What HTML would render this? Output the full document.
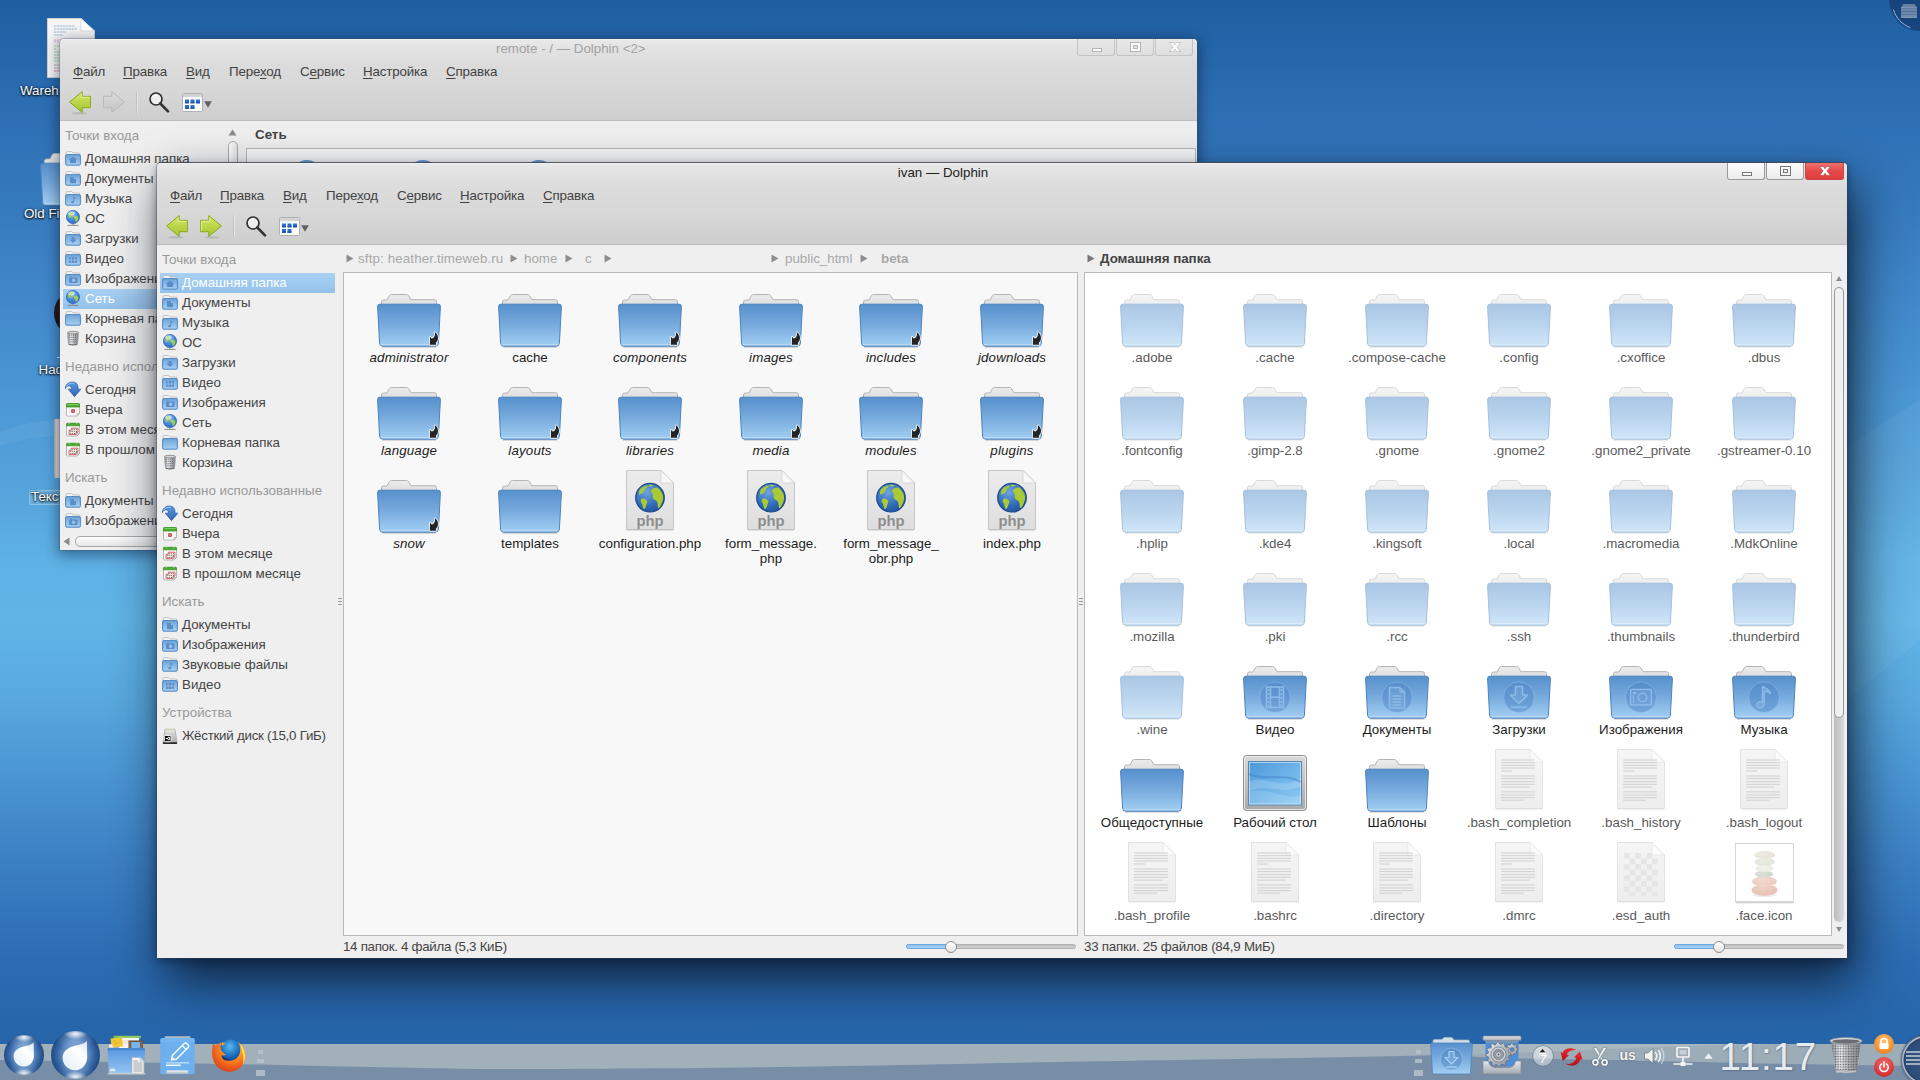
<!DOCTYPE html>
<html lang="ru"><head><meta charset="utf-8"><title>ivan — Dolphin</title>
<style>
*{box-sizing:border-box;margin:0;padding:0}
html,body{width:1920px;height:1080px;overflow:hidden}
body{position:relative;font-family:"Liberation Sans",sans-serif;font-size:13.33px;color:#444;
background:linear-gradient(180deg,#1f5fa0 0px,#2364a8 40px,#2c6db2 100px,#3579bd 200px,#4188ca 300px,#4c97d4 400px,#56a5dd 500px,#5db1e5 560px,#60b5e7 620px,#58a8de 700px,#4a94d2 780px,#3a7ec2 870px,#2c6cb2 960px,#2766ab 1020px,#2564a8 1080px);}
.abs{position:absolute}
.t{position:absolute;white-space:nowrap;line-height:16px;height:16px;margin-top:1px}
.win{position:absolute;background:#efefef;border-radius:4px 4px 0 0;}
.hdr{position:absolute;left:0;top:0;right:0;height:82px;border-radius:4px 4px 0 0;background:linear-gradient(180deg,#f5f5f5 0,#e9e9e9 1px,#e4e4e4 7px,#dcdcdc 24px,#d8d8d8 48px,#cecece 80.500px,#bcbcbc 81px,#bcbcbc 82px)}
.wb{position:absolute;top:0;width:38px;height:17px;border:1px solid #9a9a9a;border-top:none;border-radius:0 0 3px 3px;background:linear-gradient(#fdfdfd,#ececec)}
.wb.close{background:linear-gradient(#ee7272,#e64a4a 50%,#df3d3d);border-color:#c94444}
.menu span{position:absolute;top:1px;white-space:nowrap;line-height:16px;letter-spacing:-.15px}
.menu u{text-decoration:underline;text-underline-offset:1.5px;text-decoration-thickness:1px}
.sec{color:#999}
.view{position:absolute;border:1px solid #b9b9b9;background:#fff}
.lbl{position:absolute;text-align:center;white-space:nowrap;line-height:15px;transform:translateX(-50%);margin-top:1px}
.ic{position:absolute}
.dt{position:absolute;color:#fff;white-space:nowrap;line-height:16px;text-shadow:0 1px 2px #000,0 0 3px rgba(0,0,0,.8)}
</style></head>
<body>
<svg width="0" height="0" style="position:absolute"><defs>
<linearGradient id="gF" x1="0" y1="0" x2="0" y2="1"><stop offset="0" stop-color="#5690cc"/><stop offset=".5" stop-color="#78abde"/><stop offset="1" stop-color="#a2cff3"/></linearGradient>
<linearGradient id="gB" x1="0" y1="0" x2="0" y2="1"><stop offset="0" stop-color="#ececec"/><stop offset="1" stop-color="#dcdcdc"/></linearGradient>
<linearGradient id="gP" x1="0" y1="0" x2="0" y2="1"><stop offset="0" stop-color="#ececec"/><stop offset="1" stop-color="#dedede"/></linearGradient>
<radialGradient id="gGlobe" cx=".4" cy=".3" r=".8"><stop offset="0" stop-color="#6fa4e0"/><stop offset=".6" stop-color="#2f6bb8"/><stop offset="1" stop-color="#1f4f96"/></radialGradient>
<linearGradient id="gArrow" x1="0" y1="0" x2="0" y2="1"><stop offset="0" stop-color="#d6e86a"/><stop offset="1" stop-color="#a4c42e"/></linearGradient>
<linearGradient id="gArrowD" x1="0" y1="0" x2="0" y2="1"><stop offset="0" stop-color="#dcdcdc"/><stop offset="1" stop-color="#c4c4c4"/></linearGradient>
<linearGradient id="gMon" x1="0" y1="0" x2="0" y2="1"><stop offset="0" stop-color="#d9d9d9"/><stop offset="1" stop-color="#a8a8a8"/></linearGradient>
<linearGradient id="gScr" x1="0" y1="0" x2="1" y2="1"><stop offset="0" stop-color="#4d97d9"/><stop offset=".5" stop-color="#6db3e8"/><stop offset="1" stop-color="#8fcbf3"/></linearGradient>
<linearGradient id="gSF" x1="0" y1="0" x2="0" y2="1"><stop offset="0" stop-color="#6ea3d8"/><stop offset="1" stop-color="#a6d0f2"/></linearGradient>
<radialGradient id="gGlobeS" cx=".4" cy=".28" r=".85"><stop offset="0" stop-color="#a8d0f8"/><stop offset=".45" stop-color="#4a8ee0"/><stop offset="1" stop-color="#2a60b4"/></radialGradient>
<radialGradient id="gBall" cx=".5" cy=".5" r=".5"><stop offset="0" stop-color="#2a5a9a"/><stop offset=".55" stop-color="#1f4f90"/><stop offset=".8" stop-color="#3a6eae"/><stop offset="1" stop-color="#1a4482"/></radialGradient>
<linearGradient id="gTrash" x1="0" y1="0" x2="1" y2="0"><stop offset="0" stop-color="#8a8f94"/><stop offset=".3" stop-color="#e6e8ea"/><stop offset=".6" stop-color="#b0b4b8"/><stop offset="1" stop-color="#80858a"/></linearGradient>
<symbol id="folder" viewBox="0 0 64 64"><path d="M4.5 16V12Q4.5 10 6.5 10H10L12.4 5.6Q13 4.5 14.5 4.5H29.4Q30.9 4.5 31.6 5.7L33.9 9.7H57.5Q59.5 9.7 59.5 11.7V16Z" fill="url(#gB)" stroke="#b4b4b4" stroke-width="1"/><path d="M3 14.2H61Q63.7 14.2 63.4 16.9L61.4 53.3Q61.1 56.2 58.4 56.2H5.6Q2.9 56.2 2.6 53.3L.6 16.9Q.3 14.2 3 14.2Z" fill="url(#gF)" stroke="#4b83bf" stroke-width="1"/><path d="M3.6 54.6H60.4" stroke="#c4e2fa" stroke-width="1" opacity=".7"/><path d="M5 57.3H59" stroke="#000" stroke-width="1.4" opacity=".13"/></symbol><symbol id="folderlink" viewBox="0 0 64 64"><path d="M4.5 16V12Q4.5 10 6.5 10H10L12.4 5.6Q13 4.5 14.5 4.5H29.4Q30.9 4.5 31.6 5.7L33.9 9.7H57.5Q59.5 9.7 59.5 11.7V16Z" fill="url(#gB)" stroke="#b4b4b4" stroke-width="1"/><path d="M3 14.2H61Q63.7 14.2 63.4 16.9L61.4 53.3Q61.1 56.2 58.4 56.2H5.6Q2.9 56.2 2.6 53.3L.6 16.9Q.3 14.2 3 14.2Z" fill="url(#gF)" stroke="#4b83bf" stroke-width="1"/><path d="M3.6 54.6H60.4" stroke="#c4e2fa" stroke-width="1" opacity=".7"/><path d="M5 57.3H59" stroke="#000" stroke-width="1.4" opacity=".13"/><path d="M58 42.3C60.6 44 62 47.6 60.3 51.2L58.8 52.7L59.4 54.7H52.8L53.1 46.7L54.8 48.6C57.3 47.8 58.8 44.8 57.6 42.5Z" fill="#242424" stroke="#fff" stroke-width="1.5" stroke-linejoin="round" paint-order="stroke"/></symbol><symbol id="fvideo" viewBox="0 0 64 64"><path d="M4.5 16V12Q4.5 10 6.5 10H10L12.4 5.6Q13 4.5 14.5 4.5H29.4Q30.9 4.5 31.6 5.7L33.9 9.7H57.5Q59.5 9.7 59.5 11.7V16Z" fill="url(#gB)" stroke="#b4b4b4" stroke-width="1"/><path d="M3 14.2H61Q63.7 14.2 63.4 16.9L61.4 53.3Q61.1 56.2 58.4 56.2H5.6Q2.9 56.2 2.6 53.3L.6 16.9Q.3 14.2 3 14.2Z" fill="url(#gF)" stroke="#4b83bf" stroke-width="1"/><path d="M3.6 54.6H60.4" stroke="#c4e2fa" stroke-width="1" opacity=".7"/><path d="M5 57.3H59" stroke="#000" stroke-width="1.4" opacity=".13"/><circle cx="32" cy="35.2" r="15.3" fill="#4d86c6" fill-opacity=".5" stroke="#9cc6ee" stroke-opacity=".45" stroke-width="1"/><g fill="none" stroke="#8cbae8" stroke-width="1.6"><rect x="23.5" y="25" width="17" height="20.5"/><path d="M27.5 25V45.5M36.5 25V45.5M27.5 35.2H36.5"/></g><g fill="#8cbae8"><rect x="24.6" y="27" width="1.8" height="2"/><rect x="24.6" y="31" width="1.8" height="2"/><rect x="24.6" y="35" width="1.8" height="2"/><rect x="24.6" y="39" width="1.8" height="2"/><rect x="24.6" y="42.5" width="1.8" height="2"/><rect x="37.6" y="27" width="1.8" height="2"/><rect x="37.6" y="31" width="1.8" height="2"/><rect x="37.6" y="35" width="1.8" height="2"/><rect x="37.6" y="39" width="1.8" height="2"/><rect x="37.6" y="42.5" width="1.8" height="2"/></g></symbol><symbol id="fdocs" viewBox="0 0 64 64"><path d="M4.5 16V12Q4.5 10 6.5 10H10L12.4 5.6Q13 4.5 14.5 4.5H29.4Q30.9 4.5 31.6 5.7L33.9 9.7H57.5Q59.5 9.7 59.5 11.7V16Z" fill="url(#gB)" stroke="#b4b4b4" stroke-width="1"/><path d="M3 14.2H61Q63.7 14.2 63.4 16.9L61.4 53.3Q61.1 56.2 58.4 56.2H5.6Q2.9 56.2 2.6 53.3L.6 16.9Q.3 14.2 3 14.2Z" fill="url(#gF)" stroke="#4b83bf" stroke-width="1"/><path d="M3.6 54.6H60.4" stroke="#c4e2fa" stroke-width="1" opacity=".7"/><path d="M5 57.3H59" stroke="#000" stroke-width="1.4" opacity=".13"/><circle cx="32" cy="35.2" r="15.3" fill="#4d86c6" fill-opacity=".5" stroke="#9cc6ee" stroke-opacity=".45" stroke-width="1"/><path d="M24.5 25.5H35L39.5 30V46H24.5Z" fill="#8cbae8" fill-opacity=".25" stroke="#8cbae8" stroke-width="1.6"/><path d="M35 25.5V30H39.5" fill="none" stroke="#8cbae8" stroke-width="1.3"/><path d="M27.5 34H36.5M27.5 37H36.5M27.5 40H36.5M27.5 43H36.5" stroke="#8cbae8" stroke-width="1.4"/></symbol><symbol id="fdown" viewBox="0 0 64 64"><path d="M4.5 16V12Q4.5 10 6.5 10H10L12.4 5.6Q13 4.5 14.5 4.5H29.4Q30.9 4.5 31.6 5.7L33.9 9.7H57.5Q59.5 9.7 59.5 11.7V16Z" fill="url(#gB)" stroke="#b4b4b4" stroke-width="1"/><path d="M3 14.2H61Q63.7 14.2 63.4 16.9L61.4 53.3Q61.1 56.2 58.4 56.2H5.6Q2.9 56.2 2.6 53.3L.6 16.9Q.3 14.2 3 14.2Z" fill="url(#gF)" stroke="#4b83bf" stroke-width="1"/><path d="M3.6 54.6H60.4" stroke="#c4e2fa" stroke-width="1" opacity=".7"/><path d="M5 57.3H59" stroke="#000" stroke-width="1.4" opacity=".13"/><circle cx="32" cy="35.2" r="15.3" fill="#4d86c6" fill-opacity=".5" stroke="#9cc6ee" stroke-opacity=".45" stroke-width="1"/><path d="M28.5 24.5H35.5V33H40.5L32 41.5L23.5 33H28.5Z" fill="#8cbae8" fill-opacity=".25" stroke="#8cbae8" stroke-width="1.6" stroke-linejoin="round"/><path d="M24 45.3H40" stroke="#8cbae8" stroke-width="1.8"/></symbol><symbol id="fimg" viewBox="0 0 64 64"><path d="M4.5 16V12Q4.5 10 6.5 10H10L12.4 5.6Q13 4.5 14.5 4.5H29.4Q30.9 4.5 31.6 5.7L33.9 9.7H57.5Q59.5 9.7 59.5 11.7V16Z" fill="url(#gB)" stroke="#b4b4b4" stroke-width="1"/><path d="M3 14.2H61Q63.7 14.2 63.4 16.9L61.4 53.3Q61.1 56.2 58.4 56.2H5.6Q2.9 56.2 2.6 53.3L.6 16.9Q.3 14.2 3 14.2Z" fill="url(#gF)" stroke="#4b83bf" stroke-width="1"/><path d="M3.6 54.6H60.4" stroke="#c4e2fa" stroke-width="1" opacity=".7"/><path d="M5 57.3H59" stroke="#000" stroke-width="1.4" opacity=".13"/><circle cx="32" cy="35.2" r="15.3" fill="#4d86c6" fill-opacity=".5" stroke="#9cc6ee" stroke-opacity=".45" stroke-width="1"/><rect x="21.5" y="27.5" width="21" height="15.5" rx="1.5" fill="#8cbae8" fill-opacity=".2" stroke="#8cbae8" stroke-width="1.6"/><circle cx="33.5" cy="35.5" r="4.3" fill="none" stroke="#8cbae8" stroke-width="1.6"/><rect x="24" y="30" width="3.5" height="2.2" fill="#8cbae8"/><path d="M24.5 33V41" stroke="#8cbae8" stroke-width="1.3"/></symbol><symbol id="fmusic" viewBox="0 0 64 64"><path d="M4.5 16V12Q4.5 10 6.5 10H10L12.4 5.6Q13 4.5 14.5 4.5H29.4Q30.9 4.5 31.6 5.7L33.9 9.7H57.5Q59.5 9.7 59.5 11.7V16Z" fill="url(#gB)" stroke="#b4b4b4" stroke-width="1"/><path d="M3 14.2H61Q63.7 14.2 63.4 16.9L61.4 53.3Q61.1 56.2 58.4 56.2H5.6Q2.9 56.2 2.6 53.3L.6 16.9Q.3 14.2 3 14.2Z" fill="url(#gF)" stroke="#4b83bf" stroke-width="1"/><path d="M3.6 54.6H60.4" stroke="#c4e2fa" stroke-width="1" opacity=".7"/><path d="M5 57.3H59" stroke="#000" stroke-width="1.4" opacity=".13"/><circle cx="32" cy="35.2" r="15.3" fill="#4d86c6" fill-opacity=".5" stroke="#9cc6ee" stroke-opacity=".45" stroke-width="1"/><path d="M30.5 24.5C33 26 36.5 26.5 38.5 31.5C36.5 29.5 34 29.3 32.3 29.3V41.5C32.3 44.5 29.5 46 27 45.5C24.5 45 24 42.3 26 40.8C27.6 39.6 29.5 39.8 30.5 40.3Z" fill="#8cbae8" fill-opacity=".35" stroke="#8cbae8" stroke-width="1.4" stroke-linejoin="round"/></symbol><symbol id="txt" viewBox="0 0 64 64"><path d="M8.5 .5H43L55.5 13V59.5H8.5Z" fill="url(#gP)" stroke="#c6c6c6" stroke-width="1"/><path d="M43 .5V13H55.5Z" fill="#f8f8f8" stroke="#cfcfcf" stroke-width=".8" stroke-linejoin="round"/><path d="M9 60.3H55" stroke="#000" stroke-opacity=".12" stroke-width="1"/><rect x="14.200" y="10.45" width="33.7" height="1.100" fill="#a6a6a6"/><rect x="14.200" y="13.15" width="33.7" height="1.100" fill="#a6a6a6"/><rect x="14.200" y="15.85" width="33.7" height="1.100" fill="#a6a6a6"/><rect x="14.200" y="18.45" width="33.7" height="1.100" fill="#a6a6a6"/><rect x="14.200" y="21.45" width="11" height="1.100" fill="#a6a6a6"/><rect x="14.200" y="26.45" width="33.7" height="1.100" fill="#a6a6a6"/><rect x="14.200" y="29.05" width="33.7" height="1.100" fill="#a6a6a6"/><rect x="14.200" y="32.05" width="33.7" height="1.100" fill="#a6a6a6"/><rect x="14.200" y="34.75" width="33.7" height="1.100" fill="#a6a6a6"/><rect x="14.200" y="37.55" width="28.5" height="1.100" fill="#a6a6a6"/><rect x="14.200" y="42.35" width="33.7" height="1.100" fill="#a6a6a6"/><rect x="14.200" y="45.35" width="33.7" height="1.100" fill="#a6a6a6"/><rect x="14.200" y="48.05" width="33.7" height="1.100" fill="#a6a6a6"/><rect x="14.200" y="50.65" width="23" height="1.100" fill="#a6a6a6"/></symbol><symbol id="php" viewBox="0 0 64 64"><path d="M8.5 .5H43L55.5 13V59.5H8.5Z" fill="url(#gP)" stroke="#c6c6c6" stroke-width="1"/><path d="M43 .5V13H55.5Z" fill="#f8f8f8" stroke="#cfcfcf" stroke-width=".8" stroke-linejoin="round"/><path d="M9 60.3H55" stroke="#000" stroke-opacity=".12" stroke-width="1"/><circle cx="32" cy="27.7" r="14.3" fill="url(#gGlobe)" stroke="#1d4a8c" stroke-width="1.2"/><g fill="#a9c935"><path d="M22 19.5C24 17 27 15.8 29.5 15.5C30 17 28.5 18 27 18.5C27.5 20.5 25.5 21 25 23C24 24 22.5 23.5 21.5 25C20.5 23 21 21 22 19.5Z"/><path d="M23.5 29C25.5 28 27.5 29 29 30.5C30 32 28.5 34 28 36C27.5 38 26.5 39.5 25.5 39C24.5 37 24.5 34.5 23.5 33C22.5 31.5 22.5 30 23.5 29Z"/><path d="M33 20C35 18 38 17 40 18C42.5 20 44.5 23 45 26C45.5 29 44.5 32 43 35C42 37 41 38.5 40 38C39.5 36 40 34 39 32C38 30 36 30 35 28.5C34 27 35.5 25 34.5 23.5C33.5 22.5 32.5 21.5 33 20Z"/><path d="M31 15C32.5 14.5 34.5 14.8 35.5 15.5C34.5 16.5 32.5 16.8 31 16.2Z"/></g></symbol><symbol id="bin" viewBox="0 0 64 64"><path d="M8.5 .5H43L55.5 13V59.5H8.5Z" fill="url(#gP)" stroke="#c6c6c6" stroke-width="1"/><path d="M43 .5V13H55.5Z" fill="#f8f8f8" stroke="#cfcfcf" stroke-width=".8" stroke-linejoin="round"/><path d="M9 60.3H55" stroke="#000" stroke-opacity=".12" stroke-width="1"/><rect x="15.2" y="11.0" width="5.600" height="5.6" fill="#cdcdcd"/><rect x="26.4" y="11.0" width="5.600" height="5.6" fill="#cdcdcd"/><rect x="37.6" y="11.0" width="5.600" height="5.6" fill="#cdcdcd"/><rect x="20.8" y="16.6" width="5.600" height="5.6" fill="#cdcdcd"/><rect x="32.0" y="16.6" width="5.600" height="5.6" fill="#cdcdcd"/><rect x="43.2" y="16.6" width="5.600" height="5.6" fill="#cdcdcd"/><rect x="15.2" y="22.2" width="5.600" height="5.6" fill="#cdcdcd"/><rect x="26.4" y="22.2" width="5.600" height="5.6" fill="#cdcdcd"/><rect x="37.6" y="22.2" width="5.600" height="5.6" fill="#cdcdcd"/><rect x="20.8" y="27.8" width="5.600" height="5.6" fill="#cdcdcd"/><rect x="32.0" y="27.8" width="5.600" height="5.6" fill="#cdcdcd"/><rect x="43.2" y="27.8" width="5.600" height="5.6" fill="#cdcdcd"/><rect x="15.2" y="33.4" width="5.600" height="5.6" fill="#cdcdcd"/><rect x="26.4" y="33.4" width="5.600" height="5.6" fill="#cdcdcd"/><rect x="37.6" y="33.4" width="5.600" height="5.6" fill="#cdcdcd"/><rect x="20.8" y="39.0" width="5.600" height="5.6" fill="#cdcdcd"/><rect x="32.0" y="39.0" width="5.600" height="5.6" fill="#cdcdcd"/><rect x="43.2" y="39.0" width="5.600" height="5.6" fill="#cdcdcd"/><rect x="15.2" y="44.6" width="5.600" height="5.6" fill="#cdcdcd"/><rect x="26.4" y="44.6" width="5.600" height="5.6" fill="#cdcdcd"/><rect x="37.6" y="44.6" width="5.600" height="5.6" fill="#cdcdcd"/><rect x="20.8" y="50.2" width="5.600" height="4.1" fill="#cdcdcd"/><rect x="32.0" y="50.2" width="5.600" height="4.1" fill="#cdcdcd"/><rect x="43.2" y="50.2" width="5.600" height="4.1" fill="#cdcdcd"/></symbol><symbol id="desk" viewBox="0 0 64 64"><rect x=".5" y="3.5" width="63" height="55" rx="3" fill="url(#gMon)" stroke="#8e8e8e"/><rect x="1.5" y="4.5" width="61" height="53" rx="2.5" fill="none" stroke="#f2f2f2" stroke-opacity=".8"/><rect x="5.500" y="9.500" width="53" height="43.500" fill="url(#gScr)" stroke="#5a86b4"/><rect x="6.500" y="10.500" width="51" height="41.500" fill="none" stroke="#cfe8fb" stroke-opacity=".7"/><path d="M6 30C20 22 40 40 58 26V34C40 44 22 30 6 40Z" fill="#fff" fill-opacity=".18"/><path d="M6 40C24 34 40 48 58 44V52H6Z" fill="#fff" fill-opacity=".15"/><path d="M6 22C22 30 40 20 58 30" fill="none" stroke="#3f84c8" stroke-opacity=".5" stroke-width="2"/></symbol><symbol id="face" viewBox="0 0 64 64"><defs><radialGradient id="gSt" cx=".4" cy=".3" r=".8"><stop offset="0" stop-color="#fff" stop-opacity=".3"/><stop offset="1" stop-color="#fff" stop-opacity="0"/></radialGradient></defs><rect x="3.500" y="2.500" width="58" height="58" fill="#fff" stroke="#d6d6d6"/><rect x="4" y="61" width="58" height="1.300" fill="#000" fill-opacity=".18"/><ellipse cx="33" cy="54" rx="12" ry="2" fill="#000" fill-opacity=".07"/><g><ellipse cx="32.500" cy="49" rx="13" ry="5.800" fill="#e6beb0"/><ellipse cx="32.500" cy="40.500" rx="12.300" ry="5" fill="#ebc8bc"/><ellipse cx="32" cy="33.200" rx="9" ry="3.400" fill="#c9d6ca"/><ellipse cx="32.300" cy="27.300" rx="9.300" ry="3.500" fill="#ecece0"/><ellipse cx="32.500" cy="21" rx="10.300" ry="3.800" fill="#e0e5d9"/><ellipse cx="32.700" cy="14" rx="10.600" ry="4" fill="#e6e3d6"/></g><g fill="url(#gSt)"><ellipse cx="32.500" cy="49" rx="13" ry="5.800"/><ellipse cx="32.500" cy="40.500" rx="12.300" ry="5"/><ellipse cx="32" cy="33.200" rx="9" ry="3.400"/><ellipse cx="32.300" cy="27.300" rx="9.300" ry="3.500"/><ellipse cx="32.500" cy="21" rx="10.300" ry="3.800"/><ellipse cx="32.700" cy="14" rx="10.600" ry="4"/></g></symbol><symbol id="s_folder" viewBox="0 0 16 16"><path d="M1 5.5V2.8Q1 1.6 2.2 1.6H6.2Q7 1.6 7.4 2.3L7.9 3H13.8Q15 3 15 4.2V5.5Z" fill="#f6f6f6" stroke="#b4b4b4" stroke-width=".8"/><rect x=".6" y="4.6" width="14.8" height="10.6" rx="1.3" fill="url(#gSF)" stroke="#4f86c2" stroke-width="1"/></symbol><symbol id="s_home" viewBox="0 0 16 16"><path d="M1 5.5V2.8Q1 1.6 2.2 1.6H6.2Q7 1.6 7.4 2.3L7.9 3H13.8Q15 3 15 4.2V5.5Z" fill="#f6f6f6" stroke="#b4b4b4" stroke-width=".8"/><rect x=".6" y="4.6" width="14.8" height="10.6" rx="1.3" fill="url(#gSF)" stroke="#4f86c2" stroke-width="1"/><path d="M3.5 10L8 6.3L12.5 10H11V13H5V10Z" fill="#5a8ec8"/></symbol><symbol id="s_docs" viewBox="0 0 16 16"><path d="M1 5.5V2.8Q1 1.6 2.2 1.6H6.2Q7 1.6 7.4 2.3L7.9 3H13.8Q15 3 15 4.2V5.5Z" fill="#f6f6f6" stroke="#b4b4b4" stroke-width=".8"/><rect x=".6" y="4.6" width="14.8" height="10.6" rx="1.3" fill="url(#gSF)" stroke="#4f86c2" stroke-width="1"/><path d="M5 7H9L11 9V13.2H5Z" fill="#5a8ec8"/><path d="M9 7V9H11" fill="#9cc4ea"/></symbol><symbol id="s_music" viewBox="0 0 16 16"><path d="M1 5.5V2.8Q1 1.6 2.2 1.6H6.2Q7 1.6 7.4 2.3L7.9 3H13.8Q15 3 15 4.2V5.5Z" fill="#f6f6f6" stroke="#b4b4b4" stroke-width=".8"/><rect x=".6" y="4.6" width="14.8" height="10.6" rx="1.3" fill="url(#gSF)" stroke="#4f86c2" stroke-width="1"/><path d="M8.3 6.5C9.5 7 10.8 7.3 11.3 9.3C10.3 8.6 9.8 8.6 9.2 8.6V11.8C9.2 13.2 7.8 13.6 6.8 13.2C6 12.8 6 11.6 7 11.1C7.6 10.8 8 10.9 8.3 11Z" fill="#5a8ec8"/></symbol><symbol id="s_down" viewBox="0 0 16 16"><path d="M1 5.5V2.8Q1 1.6 2.2 1.6H6.2Q7 1.6 7.4 2.3L7.9 3H13.8Q15 3 15 4.2V5.5Z" fill="#f6f6f6" stroke="#b4b4b4" stroke-width=".8"/><rect x=".6" y="4.6" width="14.8" height="10.6" rx="1.3" fill="url(#gSF)" stroke="#4f86c2" stroke-width="1"/><path d="M6.5 7H9.5V9.5H11.5L8 13L4.5 9.5H6.5Z" fill="#5a8ec8"/></symbol><symbol id="s_video" viewBox="0 0 16 16"><path d="M1 5.5V2.8Q1 1.6 2.2 1.6H6.2Q7 1.6 7.4 2.3L7.9 3H13.8Q15 3 15 4.2V5.5Z" fill="#f6f6f6" stroke="#b4b4b4" stroke-width=".8"/><rect x=".6" y="4.6" width="14.8" height="10.6" rx="1.3" fill="url(#gSF)" stroke="#4f86c2" stroke-width="1"/><rect x="4" y="7" width="8" height="6" fill="#5a8ec8"/><path d="M6.2 7V13M9.8 7V13M4 10H12" stroke="#9cc4ea" stroke-width=".8"/></symbol><symbol id="s_img" viewBox="0 0 16 16"><path d="M1 5.5V2.8Q1 1.6 2.2 1.6H6.2Q7 1.6 7.4 2.3L7.9 3H13.8Q15 3 15 4.2V5.5Z" fill="#f6f6f6" stroke="#b4b4b4" stroke-width=".8"/><rect x=".6" y="4.6" width="14.8" height="10.6" rx="1.3" fill="url(#gSF)" stroke="#4f86c2" stroke-width="1"/><rect x="4" y="7.5" width="8.5" height="5.5" rx=".8" fill="#5a8ec8"/><circle cx="8.6" cy="10.3" r="1.7" fill="#9cc4ea"/><rect x="5" y="6.7" width="2" height="1" fill="#5a8ec8"/></symbol><symbol id="s_globe" viewBox="0 0 16 16"><path d="M2.500 15.400H13.500" stroke="#8a8a8a" stroke-width="1"/><path d="M8 13V15" stroke="#9a9a9a" stroke-width="1.400"/><circle cx="8" cy="7" r="6.600" fill="url(#gGlobeS)" stroke="#3a70c0" stroke-width=".800"/><path d="M4.200 3.200C5.600 1.900 7.600 1.500 8.800 1.900C8.300 3.400 6.800 3.900 6.800 5.400C6.800 6.900 5.200 6.900 4.200 8.400C3 7 3.200 4.800 4.200 3.200Z" fill="#9ed048"/><path d="M8.600 6C10.200 5 12.200 5.500 13.200 7C13.600 9 12.600 11 11 12C10 11 10.600 9.500 9.600 8.500C8.600 7.500 8.100 7 8.600 6Z" fill="#9ed048"/><ellipse cx="6.500" cy="3.600" rx="3.400" ry="2" fill="#fff" fill-opacity=".45"/></symbol><symbol id="s_trash" viewBox="0 0 16 16"><path d="M2.800 2.500C2.600 6 3 11 3.800 14.600Q8 15.600 12.200 14.600C13 11 13.400 6 13.200 2.500Z" fill="url(#gTrash)" stroke="#8a8a8a" stroke-width=".600"/><path d="M4.200 5.200H11.800M4.200 7.400H11.800M4.400 9.600H11.600M4.600 11.800H11.400" stroke="#4a4a4a" stroke-width=".900" stroke-dasharray="1 .900" opacity=".75"/><ellipse cx="8" cy="2.600" rx="5.500" ry="1.300" fill="#d8d8d8" stroke="#777" stroke-width=".700"/><path d="M3.800 14.300Q8 15.500 12.200 14.300" stroke="#666" stroke-width=".900" fill="none"/></symbol><symbol id="s_today" viewBox="0 0 16 16"><defs><linearGradient id="gTd" x1="0" y1="0" x2="0" y2="1"><stop offset="0" stop-color="#5a98e0"/><stop offset="1" stop-color="#2e66b6"/></linearGradient></defs><path d="M.2 7.800C.600 3 4 1 7.600 1C11 1 13 3.500 13 6.300V8.200H15.900L9.500 15.700L3.200 8.200H6.400C6.600 6 5.500 4.800 4 4.800C2.500 4.800 1.200 6 .2 7.800Z" fill="url(#gTd)" stroke="#2a5aa6" stroke-width=".700" stroke-linejoin="round"/><path d="M1.500 5.200C3 2.600 6 1.800 8.500 2.200" fill="none" stroke="#a8ccf4" stroke-width=".900" stroke-linecap="round"/></symbol><symbol id="s_yest" viewBox="0 0 16 16"><path d="M1.500 3.500Q1.500 2.500 2.500 2.500H13.500Q14.500 2.500 14.500 3.500V12.500L12 15H2.500Q1.500 15 1.500 14Z" fill="#fdfdfd" stroke="#a4a4a4" stroke-width=".800"/><path d="M14.500 12.500H12V15Z" fill="#e0e0e0" stroke="#a4a4a4" stroke-width=".600"/><path d="M1.500 3.500Q1.500 2.500 2.500 2.500H13.500Q14.500 2.500 14.500 3.500V6H1.500Z" fill="#4fae32" stroke="#35901f" stroke-width=".800"/><path d="M2.500 3.400H13.500" stroke="#9ae07a" stroke-width=".700"/><rect x="6.300" y="8.300" width="3.400" height="3.400" rx=".500" fill="#c01820"/><rect x="7.400" y="9.400" width="1.200" height="1.200" fill="#fff"/><path d="M4 8H4.800M11.500 8H12.300M4 12.200H4.800M11.500 10H12.300" stroke="#e8a0a0" stroke-width=".800"/></symbol><symbol id="s_month" viewBox="0 0 16 16"><path d="M1.500 3.500Q1.500 2.500 2.500 2.500H13.500Q14.500 2.500 14.500 3.500V12.500L12 15H2.500Q1.500 15 1.500 14Z" fill="#fdfdfd" stroke="#a4a4a4" stroke-width=".800"/><path d="M14.500 12.500H12V15Z" fill="#e0e0e0" stroke="#a4a4a4" stroke-width=".600"/><path d="M1.500 3.300Q1.500 2.300 2.500 2.300H13.500Q14.500 2.300 14.500 3.300V4.800H1.500Z" fill="#4fae32" stroke="#35901f" stroke-width=".800"/><path d="M4.300 .800V3M11.700 .800V3" stroke="#f4f4f4" stroke-width="1.100"/><path d="M3.600 2.200H5M11 2.200H12.400" stroke="#35901f" stroke-width=".600"/><path d="M6.300 7.200H13V11.200H11.100V13.600H4V9.300H6.300Z" fill="#fdf0f0" stroke="#cc5252" stroke-width=".900" stroke-linejoin="round"/><rect x="7.3" y="8.3" width=".9" height=".9" fill="#3a3a3a"/><rect x="9.2" y="8.3" width=".9" height=".9" fill="#3a3a3a"/><rect x="11.1" y="8.3" width=".9" height=".9" fill="#3a3a3a"/><rect x="5.4" y="10.2" width=".9" height=".9" fill="#3a3a3a"/><rect x="7.3" y="10.2" width=".9" height=".9" fill="#3a3a3a"/><rect x="9.2" y="10.2" width=".9" height=".9" fill="#3a3a3a"/><rect x="11.1" y="10.2" width=".9" height=".9" fill="#3a3a3a"/><rect x="5.4" y="12.1" width=".9" height=".9" fill="#3a3a3a"/><rect x="7.3" y="12.1" width=".9" height=".9" fill="#3a3a3a"/><rect x="9.2" y="12.1" width=".9" height=".9" fill="#3a3a3a"/></symbol><symbol id="s_disk" viewBox="0 0 16 16"><defs><linearGradient id="gDsk" x1="0" y1="0" x2="0" y2="1"><stop offset="0" stop-color="#e4e4e0"/><stop offset=".5" stop-color="#c4c4c4"/><stop offset="1" stop-color="#a8a8a8"/></linearGradient></defs><path d="M3 1.200H13L14.900 13.600V16H1.100V13.600Z" fill="url(#gDsk)" stroke="#9c9c9c" stroke-width=".600"/><path d="M4 1.900H12" stroke="#d4e4a8" stroke-width="1"/><path d="M3.600 3.600H12.400" stroke="#f4f4f4" stroke-width=".700" opacity=".8"/><rect x="1.100" y="14.200" width="13.800" height="1.800" fill="#2c2c2c"/><rect x="2.300" y="7.400" width="6.800" height="6.300" rx="1.300" fill="#0c0c0c" stroke="#fff" stroke-width="1"/><path d="M3.800 10.500H6M5.700 9.300H7.500V11.700H5.700" stroke="#fff" stroke-width="1" fill="none"/></symbol><symbol id="t_back" viewBox="0 0 22 24"><ellipse cx="10" cy="22.300" rx="8" ry="1.300" fill="#000" fill-opacity=".1"/><path d="M13.200 .600V5.300H21.600V16.700H13.200V21.400L.600 11Z" fill="url(#gArrow)" stroke="#86a81c" stroke-width="1" stroke-linejoin="round"/><path d="M12.200 2.800V6.300H20.600" fill="none" stroke="#eef8b4" stroke-width=".900" opacity=".8"/></symbol><symbol id="t_fwd" viewBox="0 0 22 24"><ellipse cx="12" cy="22.300" rx="8" ry="1.300" fill="#000" fill-opacity=".1"/><path d="M8.800 .600V5.300H.400V16.700H8.800V21.400L21.400 11Z" fill="url(#gArrow)" stroke="#86a81c" stroke-width="1" stroke-linejoin="round"/><path d="M1.400 15.700V6.300H9.800V2.800" fill="none" stroke="#eef8b4" stroke-width=".900" opacity=".8"/></symbol><symbol id="t_fwdd" viewBox="0 0 22 24"><path d="M8.800 .600V5.300H.400V16.700H8.800V21.400L21.400 11Z" fill="url(#gArrowD)" stroke="#b8b8b8" stroke-width="1" stroke-linejoin="round"/></symbol><symbol id="t_find" viewBox="0 0 22 22"><circle cx="8" cy="8" r="6" fill="#f4f4f4" fill-opacity=".8" stroke="#2e2e2e" stroke-width="1.7"/><path d="M12.3 12.5L20 20.3" stroke="#333" stroke-width="2.6" stroke-linecap="round"/><path d="M4.5 6.5C5.3 4.5 7.5 3.8 9 4.2" stroke="#fff" stroke-width="1.2" fill="none"/></symbol><symbol id="t_view" viewBox="0 0 22 22"><rect x=".5" y="1.5" width="20" height="18" rx="1" fill="#fdfdfd" stroke="#b0b0b0"/><rect x="1" y="2" width="19" height="3.2" fill="#d4d4d4"/><rect x="3" y="7.5" width="4" height="3.8" fill="#2f6fd0"/><rect x="3" y="9.9" width="4" height="1.4" fill="#1c4fa8"/><rect x="8.5" y="7.5" width="4" height="3.8" fill="#2f6fd0"/><rect x="8.5" y="9.9" width="4" height="1.4" fill="#1c4fa8"/><rect x="14" y="7.5" width="4" height="3.8" fill="#2f6fd0"/><rect x="14" y="9.9" width="4" height="1.4" fill="#1c4fa8"/><rect x="3" y="13" width="4" height="3.8" fill="#2f6fd0"/><rect x="3" y="15.4" width="4" height="1.4" fill="#1c4fa8"/><rect x="8.5" y="13" width="4" height="3.8" fill="#2f6fd0"/><rect x="8.5" y="15.4" width="4" height="1.4" fill="#1c4fa8"/></symbol></defs></svg>
<svg class="abs" style="left:0;top:0" width="1920" height="1080"><path d="M1847 446L1920 400V640L1847 700Z" fill="#fff" fill-opacity=".05"/><path d="M0 432C20 424 40 420 60 420V436C40 436 20 440 0 446Z" fill="#fff" fill-opacity=".05"/></svg><div class="abs" style="left:1889px;top:-31px;width:62px;height:62px;border-radius:31px;background:rgba(22,62,116,.82);box-shadow:inset 0 0 0 1px rgba(30,80,140,.5),0 0 3px rgba(40,110,190,.6)"></div><svg class="abs" style="left:1889px;top:0" width="31" height="32" viewBox="0 0 31 32"><path d="M4.5 10C7 18 13 24.5 21 27.5" fill="none" stroke="#a8c8ee" stroke-width="1" stroke-linecap="round" opacity=".9"/><path d="M14.5 4L12 7.4H28L25.5 4Z" fill="#66809e"/><rect x="12" y="7.400" width="16" height="1" fill="#a4b8d0"/><rect x="12" y="8.400" width="16" height="2.600" fill="#6e86a4"/><rect x="12" y="11.600" width="16" height="1" fill="#a4b8d0"/><rect x="12" y="12.600" width="16" height="2.200" fill="#6e86a4"/><rect x="12" y="15.400" width="16" height="1" fill="#a4b8d0"/><rect x="12" y="16.400" width="16" height="1.500" fill="#8a9eb8"/></svg><svg class="abs" style="left:47px;top:18px" width="50" height="62" viewBox="0 0 50 62"><path d="M.5 .5H34L47.5 13V59.5H.5Z" fill="#f4f4f4" stroke="#d0d0d0"/><path d="M34 .5V13H47.5Z" fill="#fff" stroke="#d4d4d4" stroke-width=".8"/><g stroke-width=".8" opacity=".75" stroke-dasharray="2.5 .5"><path d="M7 8H28M7 11H30M7 14H19M7 17H16" stroke="#5aa0c8"/><path d="M7 22H14M7 24H14" stroke="#d070d0"/><path d="M7 28H14M7 31H9M7 34H14M7 37H14M7 40H14M7 43H14" stroke="#60c860"/><path d="M7 47H14M7 50H14" stroke="#a08080"/><path d="M7 53H14" stroke="#e05050"/></g></svg><div class="dt" style="left:20px;top:83px">Wareh</div><svg class="ic" style="left:39.5px;top:148.5px" width="64" height="64"><use href="#folder"/></svg><div class="dt" style="left:24px;top:206px">Old Fi</div><div class="abs" style="left:54.400px;top:289.400px;width:48px;height:48px;border-radius:24px;background:radial-gradient(circle at 40% 40%,#3a2222,#1a1010 70%)"></div><div class="abs" style="left:57px;top:357px;width:3px;height:1px;background:#dde"></div><div class="dt" style="left:38.500px;top:362px">Had</div><div class="abs" style="left:54px;top:419px;width:40px;height:59px;background:linear-gradient(90deg,#a8a8a8 0,#d4d4d4 2px,#dadada 100%)"></div><div class="abs" style="left:28.500px;top:489.500px;width:60px;height:15.500px;background:rgba(255,255,255,.12);border:1px solid rgba(255,255,255,.22);border-radius:2px"></div><div class="dt" style="left:31px;top:489px">Текст</div>
<div class="win" id="win2" style="left:60px;top:39px;width:1137px;height:511px;overflow:hidden;box-shadow:0 0 0 1px rgba(70,80,100,.3),0 3px 14px 2px rgba(0,10,40,.45)"><div class="hdr"></div><div class="t" style="left:436px;top:1px;color:#a2a2a2">remote - / — Dolphin &lt;2&gt;</div><div class="wb" style="left:1017px;background:linear-gradient(#e8e8e8,#dedede);border-color:#c4c4c4;"><div class="abs" style="left:14px;top:9px;width:10px;height:4px;border:1px solid #b4b4b4;background:#fbfbfb"></div></div><div class="wb" style="left:1056px;background:linear-gradient(#e8e8e8,#dedede);border-color:#c4c4c4;"><div class="abs" style="left:13px;top:3px;width:11px;height:10px;border:1px solid #b4b4b4;background:#fbfbfb"></div><div class="abs" style="left:16px;top:6px;width:5px;height:4px;border:1px solid #b4b4b4;background:#e2e2e2"></div></div><div class="wb" style="left:1095px;background:linear-gradient(#e8e8e8,#dedede);border-color:#c4c4c4;"><svg class="abs" style="left:13px;top:3px" width="12" height="10" viewBox="0 0 12 10"><path d="M.5 .5H4.400L6 2.700L7.600 .5H11.500L8 5L11.500 9.500H7.600L6 7.300L4.400 9.500H.5L4 5Z" fill="#fcfcfc" stroke="#b8b8b8" stroke-width=".7"/></svg></div><div class="menu abs" style="left:0;top:24px;color:#424242"><span style="left:13px"><u>Ф</u>айл</span><span style="left:63px"><u>П</u>равка</span><span style="left:126px"><u>В</u>ид</span><span style="left:169px">Пере<u>х</u>од</span><span style="left:240px">С<u>е</u>рвис</span><span style="left:303px"><u>Н</u>астройка</span><span style="left:386px"><u>С</u>правка</span></div><svg class="ic" style="left:9px;top:52px" width="22" height="24"><use href="#t_back"/></svg><svg class="ic" style="left:43px;top:52px" width="22" height="24"><use href="#t_fwdd"/></svg><div class="abs" style="left:76px;top:52px;width:1px;height:22px;background:#c0c0c0"></div><div class="abs" style="left:77px;top:52px;width:1px;height:22px;background:#e8e8e8"></div><svg class="ic" style="left:88px;top:51.5px" width="22" height="22"><use href="#t_find"/></svg><svg class="ic" style="left:121.5px;top:52.5px" width="22" height="22"><use href="#t_view"/></svg><svg class="ic" style="left:143.5px;top:62px" width="8" height="7" viewBox="0 0 8 7"><path d="M.2 .2H7.800L4 6.800Z" fill="#606060"/></svg><div class="t sec" style="left:5px;top:88px">Точки входа</div><div class="abs" style="left:3px;top:250px;width:166px;height:20px;background:linear-gradient(#a9d1f5,#94c1ea)"></div><svg class="ic" style="left:5px;top:111px" width="16" height="16"><use href="#s_home"/></svg><div class="t" style="left:25px;top:111px;color:#444;">Домашняя папка</div><svg class="ic" style="left:5px;top:131px" width="16" height="16"><use href="#s_docs"/></svg><div class="t" style="left:25px;top:131px;color:#444;">Документы</div><svg class="ic" style="left:5px;top:151px" width="16" height="16"><use href="#s_music"/></svg><div class="t" style="left:25px;top:151px;color:#444;">Музыка</div><svg class="ic" style="left:5px;top:171px" width="16" height="16"><use href="#s_globe"/></svg><div class="t" style="left:25px;top:171px;color:#444;">ОС</div><svg class="ic" style="left:5px;top:191px" width="16" height="16"><use href="#s_down"/></svg><div class="t" style="left:25px;top:191px;color:#444;">Загрузки</div><svg class="ic" style="left:5px;top:211px" width="16" height="16"><use href="#s_video"/></svg><div class="t" style="left:25px;top:211px;color:#444;">Видео</div><svg class="ic" style="left:5px;top:231px" width="16" height="16"><use href="#s_img"/></svg><div class="t" style="left:25px;top:231px;color:#444;">Изображения</div><svg class="ic" style="left:5px;top:251px" width="16" height="16"><use href="#s_globe"/></svg><div class="t" style="left:25px;top:251px;color:#fff;">Сеть</div><svg class="ic" style="left:5px;top:271px" width="16" height="16"><use href="#s_folder"/></svg><div class="t" style="left:25px;top:271px;color:#444;">Корневая папка</div><svg class="ic" style="left:5px;top:291px" width="16" height="16"><use href="#s_trash"/></svg><div class="t" style="left:25px;top:291px;color:#444;">Корзина</div><div class="t sec" style="left:5px;top:319px">Недавно использованные</div><svg class="ic" style="left:5px;top:342px" width="16" height="16"><use href="#s_today"/></svg><div class="t" style="left:25px;top:342px;color:#444;">Сегодня</div><svg class="ic" style="left:5px;top:362px" width="16" height="16"><use href="#s_yest"/></svg><div class="t" style="left:25px;top:362px;color:#444;">Вчера</div><svg class="ic" style="left:5px;top:382px" width="16" height="16"><use href="#s_month"/></svg><div class="t" style="left:25px;top:382px;color:#444;">В этом месяце</div><svg class="ic" style="left:5px;top:402px" width="16" height="16"><use href="#s_month"/></svg><div class="t" style="left:25px;top:402px;color:#444;">В прошлом месяце</div><div class="t sec" style="left:5px;top:430px">Искать</div><svg class="ic" style="left:5px;top:453px" width="16" height="16"><use href="#s_docs"/></svg><div class="t" style="left:25px;top:453px;color:#444;">Документы</div><svg class="ic" style="left:5px;top:473px" width="16" height="16"><use href="#s_img"/></svg><div class="t" style="left:25px;top:473px;color:#444;">Изображения</div><svg class="ic" style="left:168px;top:90px" width="9" height="7" viewBox="0 0 9 7"><path d="M4.5 .5L8.5 6.5H.5Z" fill="#8a8a8a"/></svg><div class="abs" style="left:168px;top:102px;width:10px;height:300px;border:1px solid #a8a8a8;border-radius:5px;background:linear-gradient(90deg,#fdfdfd,#e6e6e6)"></div><svg class="ic" style="left:3px;top:498px" width="7" height="9" viewBox="0 0 7 9"><path d="M.5 4.5L6.5 .5V8.5Z" fill="#8a8a8a"/></svg><div class="abs" style="left:15px;top:497px;width:200px;height:11px;border:1px solid #a8a8a8;border-radius:5px;background:linear-gradient(#fdfdfd,#e6e6e6)"></div><div class="t" style="left:195px;top:87px;color:#444;font-weight:bold">Сеть</div><div class="view" style="left:186px;top:109px;width:950px;height:420px;background:#f8f8f8"></div><div class="abs" style="left:231px;top:121px;width:32px;height:32px;border-radius:16px;background:#6a9fd8"></div><div class="abs" style="left:347px;top:121px;width:32px;height:32px;border-radius:16px;background:#6a9fd8"></div><div class="abs" style="left:463px;top:121px;width:32px;height:32px;border-radius:16px;background:#6a9fd8"></div></div>
<div class="win" id="win1" style="left:157px;top:163px;width:1690px;height:795px;box-shadow:0 -1px 0 0 rgba(70,70,70,.7),0 0 0 1px rgba(50,60,80,.35),8px 22px 50px 0 rgba(6,16,32,.82),0 3px 10px rgba(0,10,30,.4)"><div class="hdr"></div><div class="t" style="left:0;width:1690px;text-align:center;top:1px;color:#222;padding-right:118px">ivan — Dolphin</div><div class="wb" style="left:1570px;"><div class="abs" style="left:14px;top:9px;width:10px;height:4px;border:1px solid #777;background:#fafafa"></div></div><div class="wb" style="left:1609px;"><div class="abs" style="left:13px;top:3px;width:11px;height:10px;border:1px solid #777;background:transparent"></div><div class="abs" style="left:16px;top:6px;width:5px;height:4px;border:1px solid #777;background:transparent"></div></div><div class="wb close" style="left:1648px;width:39px"><svg class="abs" style="left:13px;top:3px" width="12" height="10" viewBox="0 0 12 10"><path d="M.5 .5H4.400L6 2.700L7.600 .5H11.500L8 5L11.500 9.500H7.600L6 7.300L4.400 9.500H.5L4 5Z" fill="#fff" stroke="#b83030" stroke-width=".6"/></svg></div><div class="menu abs" style="left:0;top:24px;color:#424242"><span style="left:13px"><u>Ф</u>айл</span><span style="left:63px"><u>П</u>равка</span><span style="left:126px"><u>В</u>ид</span><span style="left:169px">Пере<u>х</u>од</span><span style="left:240px">С<u>е</u>рвис</span><span style="left:303px"><u>Н</u>астройка</span><span style="left:386px"><u>С</u>правка</span></div><svg class="ic" style="left:9px;top:52px" width="22" height="24"><use href="#t_back"/></svg><svg class="ic" style="left:43px;top:52px" width="22" height="24"><use href="#t_fwd"/></svg><div class="abs" style="left:76px;top:52px;width:1px;height:22px;background:#c0c0c0"></div><div class="abs" style="left:77px;top:52px;width:1px;height:22px;background:#e8e8e8"></div><svg class="ic" style="left:88px;top:51.5px" width="22" height="22"><use href="#t_find"/></svg><svg class="ic" style="left:121.5px;top:52.5px" width="22" height="22"><use href="#t_view"/></svg><svg class="ic" style="left:143.5px;top:62px" width="8" height="7" viewBox="0 0 8 7"><path d="M.2 .2H7.800L4 6.800Z" fill="#606060"/></svg><div class="t sec" style="left:5px;top:88px">Точки входа</div><div class="abs" style="left:3px;top:110px;width:175px;height:20px;background:linear-gradient(#a9d1f5,#94c1ea)"></div><svg class="ic" style="left:5px;top:111px" width="16" height="16"><use href="#s_home"/></svg><div class="t" style="left:25px;top:111px;color:#fff;">Домашняя папка</div><svg class="ic" style="left:5px;top:131px" width="16" height="16"><use href="#s_docs"/></svg><div class="t" style="left:25px;top:131px;color:#444;">Документы</div><svg class="ic" style="left:5px;top:151px" width="16" height="16"><use href="#s_music"/></svg><div class="t" style="left:25px;top:151px;color:#444;">Музыка</div><svg class="ic" style="left:5px;top:171px" width="16" height="16"><use href="#s_globe"/></svg><div class="t" style="left:25px;top:171px;color:#444;">ОС</div><svg class="ic" style="left:5px;top:191px" width="16" height="16"><use href="#s_down"/></svg><div class="t" style="left:25px;top:191px;color:#444;">Загрузки</div><svg class="ic" style="left:5px;top:211px" width="16" height="16"><use href="#s_video"/></svg><div class="t" style="left:25px;top:211px;color:#444;">Видео</div><svg class="ic" style="left:5px;top:231px" width="16" height="16"><use href="#s_img"/></svg><div class="t" style="left:25px;top:231px;color:#444;">Изображения</div><svg class="ic" style="left:5px;top:251px" width="16" height="16"><use href="#s_globe"/></svg><div class="t" style="left:25px;top:251px;color:#444;">Сеть</div><svg class="ic" style="left:5px;top:271px" width="16" height="16"><use href="#s_folder"/></svg><div class="t" style="left:25px;top:271px;color:#444;">Корневая папка</div><svg class="ic" style="left:5px;top:291px" width="16" height="16"><use href="#s_trash"/></svg><div class="t" style="left:25px;top:291px;color:#444;">Корзина</div><div class="t sec" style="left:5px;top:319px">Недавно использованные</div><svg class="ic" style="left:5px;top:342px" width="16" height="16"><use href="#s_today"/></svg><div class="t" style="left:25px;top:342px;color:#444;">Сегодня</div><svg class="ic" style="left:5px;top:362px" width="16" height="16"><use href="#s_yest"/></svg><div class="t" style="left:25px;top:362px;color:#444;">Вчера</div><svg class="ic" style="left:5px;top:382px" width="16" height="16"><use href="#s_month"/></svg><div class="t" style="left:25px;top:382px;color:#444;">В этом месяце</div><svg class="ic" style="left:5px;top:402px" width="16" height="16"><use href="#s_month"/></svg><div class="t" style="left:25px;top:402px;color:#444;">В прошлом месяце</div><div class="t sec" style="left:5px;top:430px">Искать</div><svg class="ic" style="left:5px;top:453px" width="16" height="16"><use href="#s_docs"/></svg><div class="t" style="left:25px;top:453px;color:#444;">Документы</div><svg class="ic" style="left:5px;top:473px" width="16" height="16"><use href="#s_img"/></svg><div class="t" style="left:25px;top:473px;color:#444;">Изображения</div><svg class="ic" style="left:5px;top:493px" width="16" height="16"><use href="#s_music"/></svg><div class="t" style="left:25px;top:493px;color:#444;">Звуковые файлы</div><svg class="ic" style="left:5px;top:513px" width="16" height="16"><use href="#s_video"/></svg><div class="t" style="left:25px;top:513px;color:#444;">Видео</div><div class="t sec" style="left:5px;top:541px">Устройства</div><svg class="ic" style="left:5px;top:565px" width="16" height="16"><use href="#s_disk"/></svg><div class="t" style="left:25px;top:564px;color:#444;letter-spacing:-.25px">Жёсткий диск (15,0 ГиБ)</div><div class="abs" style="left:181px;top:435px;width:4px;height:1px;background:#999"></div><div class="abs" style="left:181px;top:438px;width:4px;height:1px;background:#999"></div><div class="abs" style="left:181px;top:441px;width:4px;height:1px;background:#999"></div><div class="abs" style="left:922px;top:435px;width:4px;height:1px;background:#999"></div><div class="abs" style="left:922px;top:438px;width:4px;height:1px;background:#999"></div><div class="abs" style="left:922px;top:441px;width:4px;height:1px;background:#999"></div><svg class="ic" style="left:189px;top:91px" width="8" height="9" viewBox="0 0 8 9"><path d="M.5 .5L7.5 4.5L.5 8.5Z" fill="#8e8e8e"/></svg><svg class="ic" style="left:353px;top:91px" width="8" height="9" viewBox="0 0 8 9"><path d="M.5 .5L7.5 4.5L.5 8.5Z" fill="#8e8e8e"/></svg><svg class="ic" style="left:408px;top:91px" width="8" height="9" viewBox="0 0 8 9"><path d="M.5 .5L7.5 4.5L.5 8.5Z" fill="#8e8e8e"/></svg><svg class="ic" style="left:447px;top:91px" width="8" height="9" viewBox="0 0 8 9"><path d="M.5 .5L7.5 4.5L.5 8.5Z" fill="#8e8e8e"/></svg><svg class="ic" style="left:614px;top:91px" width="8" height="9" viewBox="0 0 8 9"><path d="M.5 .5L7.5 4.5L.5 8.5Z" fill="#8e8e8e"/></svg><svg class="ic" style="left:703px;top:91px" width="8" height="9" viewBox="0 0 8 9"><path d="M.5 .5L7.5 4.5L.5 8.5Z" fill="#8e8e8e"/></svg><div class="t" style="left:201px;top:87px;color:#a8a8a8;letter-spacing:.13px;">sftp: heather.timeweb.ru</div><div class="t" style="left:367px;top:87px;color:#a8a8a8;">home</div><div class="t" style="left:428px;top:87px;color:#a8a8a8;">c</div><div class="t" style="left:628px;top:87px;color:#a8a8a8;">public_html</div><div class="t" style="left:724px;top:87px;color:#a8a8a8;font-weight:bold;">beta</div><svg class="ic" style="left:930px;top:91px" width="8" height="9" viewBox="0 0 8 9"><path d="M.5 .5L7.5 4.5L.5 8.5Z" fill="#777"/></svg><div class="t" style="left:943px;top:87px;color:#444;font-weight:bold">Домашняя папка</div><div class="view" style="left:186px;top:109px;width:735px;height:664px;background:#f8f8f8"></div><div class="view" style="left:927px;top:109px;width:748px;height:664px"></div><svg class="ic" style="left:220px;top:127px" width="64" height="64"><use href="#folderlink"/></svg><div class="lbl" style="left:252px;top:186px;color:#1c1c1c;font-style:italic;letter-spacing:.150px;">administrator</div><svg class="ic" style="left:341px;top:127px" width="64" height="64"><use href="#folder"/></svg><div class="lbl" style="left:373px;top:186px;color:#1c1c1c;">cache</div><svg class="ic" style="left:461px;top:127px" width="64" height="64"><use href="#folderlink"/></svg><div class="lbl" style="left:493px;top:186px;color:#1c1c1c;font-style:italic;letter-spacing:.150px;">components</div><svg class="ic" style="left:582px;top:127px" width="64" height="64"><use href="#folderlink"/></svg><div class="lbl" style="left:614px;top:186px;color:#1c1c1c;font-style:italic;letter-spacing:.150px;">images</div><svg class="ic" style="left:702px;top:127px" width="64" height="64"><use href="#folderlink"/></svg><div class="lbl" style="left:734px;top:186px;color:#1c1c1c;font-style:italic;letter-spacing:.150px;">includes</div><svg class="ic" style="left:823px;top:127px" width="64" height="64"><use href="#folderlink"/></svg><div class="lbl" style="left:855px;top:186px;color:#1c1c1c;font-style:italic;letter-spacing:.150px;">jdownloads</div><svg class="ic" style="left:220px;top:220px" width="64" height="64"><use href="#folderlink"/></svg><div class="lbl" style="left:252px;top:279px;color:#1c1c1c;font-style:italic;letter-spacing:.150px;">language</div><svg class="ic" style="left:341px;top:220px" width="64" height="64"><use href="#folderlink"/></svg><div class="lbl" style="left:373px;top:279px;color:#1c1c1c;font-style:italic;letter-spacing:.150px;">layouts</div><svg class="ic" style="left:461px;top:220px" width="64" height="64"><use href="#folderlink"/></svg><div class="lbl" style="left:493px;top:279px;color:#1c1c1c;font-style:italic;letter-spacing:.150px;">libraries</div><svg class="ic" style="left:582px;top:220px" width="64" height="64"><use href="#folderlink"/></svg><div class="lbl" style="left:614px;top:279px;color:#1c1c1c;font-style:italic;letter-spacing:.150px;">media</div><svg class="ic" style="left:702px;top:220px" width="64" height="64"><use href="#folderlink"/></svg><div class="lbl" style="left:734px;top:279px;color:#1c1c1c;font-style:italic;letter-spacing:.150px;">modules</div><svg class="ic" style="left:823px;top:220px" width="64" height="64"><use href="#folderlink"/></svg><div class="lbl" style="left:855px;top:279px;color:#1c1c1c;font-style:italic;letter-spacing:.150px;">plugins</div><svg class="ic" style="left:220px;top:313px" width="64" height="64"><use href="#folderlink"/></svg><div class="lbl" style="left:252px;top:372px;color:#1c1c1c;font-style:italic;letter-spacing:.150px;">snow</div><svg class="ic" style="left:341px;top:313px" width="64" height="64"><use href="#folder"/></svg><div class="lbl" style="left:373px;top:372px;color:#1c1c1c;">templates</div><svg class="ic" style="left:461px;top:307px" width="64" height="64"><use href="#php"/></svg><div class="abs" style="left:469px;top:350px;width:48px;text-align:center;font-weight:bold;font-size:14.800px;line-height:16px;color:#8e8e8e">php</div><div class="lbl" style="left:493px;top:372px;color:#1c1c1c;">configuration.php</div><svg class="ic" style="left:582px;top:307px" width="64" height="64"><use href="#php"/></svg><div class="abs" style="left:590px;top:350px;width:48px;text-align:center;font-weight:bold;font-size:14.800px;line-height:16px;color:#8e8e8e">php</div><div class="lbl" style="left:614px;top:372px;color:#1c1c1c;">form_message.<br>php</div><svg class="ic" style="left:702px;top:307px" width="64" height="64"><use href="#php"/></svg><div class="abs" style="left:710px;top:350px;width:48px;text-align:center;font-weight:bold;font-size:14.800px;line-height:16px;color:#8e8e8e">php</div><div class="lbl" style="left:734px;top:372px;color:#1c1c1c;">form_message_<br>obr.php</div><svg class="ic" style="left:823px;top:307px" width="64" height="64"><use href="#php"/></svg><div class="abs" style="left:831px;top:350px;width:48px;text-align:center;font-weight:bold;font-size:14.800px;line-height:16px;color:#8e8e8e">php</div><div class="lbl" style="left:855px;top:372px;color:#1c1c1c;">index.php</div><svg class="ic" style="left:963px;top:127px;opacity:.5" width="64" height="64"><use href="#folder"/></svg><div class="lbl" style="left:995px;top:186px;color:#5a5a5a">.adobe</div><svg class="ic" style="left:1086px;top:127px;opacity:.5" width="64" height="64"><use href="#folder"/></svg><div class="lbl" style="left:1118px;top:186px;color:#5a5a5a">.cache</div><svg class="ic" style="left:1208px;top:127px;opacity:.5" width="64" height="64"><use href="#folder"/></svg><div class="lbl" style="left:1240px;top:186px;color:#5a5a5a">.compose-cache</div><svg class="ic" style="left:1330px;top:127px;opacity:.5" width="64" height="64"><use href="#folder"/></svg><div class="lbl" style="left:1362px;top:186px;color:#5a5a5a">.config</div><svg class="ic" style="left:1452px;top:127px;opacity:.5" width="64" height="64"><use href="#folder"/></svg><div class="lbl" style="left:1484px;top:186px;color:#5a5a5a">.cxoffice</div><svg class="ic" style="left:1575px;top:127px;opacity:.5" width="64" height="64"><use href="#folder"/></svg><div class="lbl" style="left:1607px;top:186px;color:#5a5a5a">.dbus</div><svg class="ic" style="left:963px;top:220px;opacity:.5" width="64" height="64"><use href="#folder"/></svg><div class="lbl" style="left:995px;top:279px;color:#5a5a5a">.fontconfig</div><svg class="ic" style="left:1086px;top:220px;opacity:.5" width="64" height="64"><use href="#folder"/></svg><div class="lbl" style="left:1118px;top:279px;color:#5a5a5a">.gimp-2.8</div><svg class="ic" style="left:1208px;top:220px;opacity:.5" width="64" height="64"><use href="#folder"/></svg><div class="lbl" style="left:1240px;top:279px;color:#5a5a5a">.gnome</div><svg class="ic" style="left:1330px;top:220px;opacity:.5" width="64" height="64"><use href="#folder"/></svg><div class="lbl" style="left:1362px;top:279px;color:#5a5a5a">.gnome2</div><svg class="ic" style="left:1452px;top:220px;opacity:.5" width="64" height="64"><use href="#folder"/></svg><div class="lbl" style="left:1484px;top:279px;color:#5a5a5a">.gnome2_private</div><svg class="ic" style="left:1575px;top:220px;opacity:.5" width="64" height="64"><use href="#folder"/></svg><div class="lbl" style="left:1607px;top:279px;color:#5a5a5a">.gstreamer-0.10</div><svg class="ic" style="left:963px;top:313px;opacity:.5" width="64" height="64"><use href="#folder"/></svg><div class="lbl" style="left:995px;top:372px;color:#5a5a5a">.hplip</div><svg class="ic" style="left:1086px;top:313px;opacity:.5" width="64" height="64"><use href="#folder"/></svg><div class="lbl" style="left:1118px;top:372px;color:#5a5a5a">.kde4</div><svg class="ic" style="left:1208px;top:313px;opacity:.5" width="64" height="64"><use href="#folder"/></svg><div class="lbl" style="left:1240px;top:372px;color:#5a5a5a">.kingsoft</div><svg class="ic" style="left:1330px;top:313px;opacity:.5" width="64" height="64"><use href="#folder"/></svg><div class="lbl" style="left:1362px;top:372px;color:#5a5a5a">.local</div><svg class="ic" style="left:1452px;top:313px;opacity:.5" width="64" height="64"><use href="#folder"/></svg><div class="lbl" style="left:1484px;top:372px;color:#5a5a5a">.macromedia</div><svg class="ic" style="left:1575px;top:313px;opacity:.5" width="64" height="64"><use href="#folder"/></svg><div class="lbl" style="left:1607px;top:372px;color:#5a5a5a">.MdkOnline</div><svg class="ic" style="left:963px;top:406px;opacity:.5" width="64" height="64"><use href="#folder"/></svg><div class="lbl" style="left:995px;top:465px;color:#5a5a5a">.mozilla</div><svg class="ic" style="left:1086px;top:406px;opacity:.5" width="64" height="64"><use href="#folder"/></svg><div class="lbl" style="left:1118px;top:465px;color:#5a5a5a">.pki</div><svg class="ic" style="left:1208px;top:406px;opacity:.5" width="64" height="64"><use href="#folder"/></svg><div class="lbl" style="left:1240px;top:465px;color:#5a5a5a">.rcc</div><svg class="ic" style="left:1330px;top:406px;opacity:.5" width="64" height="64"><use href="#folder"/></svg><div class="lbl" style="left:1362px;top:465px;color:#5a5a5a">.ssh</div><svg class="ic" style="left:1452px;top:406px;opacity:.5" width="64" height="64"><use href="#folder"/></svg><div class="lbl" style="left:1484px;top:465px;color:#5a5a5a">.thumbnails</div><svg class="ic" style="left:1575px;top:406px;opacity:.5" width="64" height="64"><use href="#folder"/></svg><div class="lbl" style="left:1607px;top:465px;color:#5a5a5a">.thunderbird</div><svg class="ic" style="left:963px;top:499px;opacity:.5" width="64" height="64"><use href="#folder"/></svg><div class="lbl" style="left:995px;top:558px;color:#5a5a5a">.wine</div><svg class="ic" style="left:1086px;top:499px" width="64" height="64"><use href="#fvideo"/></svg><div class="lbl" style="left:1118px;top:558px;color:#1c1c1c">Видео</div><svg class="ic" style="left:1208px;top:499px" width="64" height="64"><use href="#fdocs"/></svg><div class="lbl" style="left:1240px;top:558px;color:#1c1c1c">Документы</div><svg class="ic" style="left:1330px;top:499px" width="64" height="64"><use href="#fdown"/></svg><div class="lbl" style="left:1362px;top:558px;color:#1c1c1c">Загрузки</div><svg class="ic" style="left:1452px;top:499px" width="64" height="64"><use href="#fimg"/></svg><div class="lbl" style="left:1484px;top:558px;color:#1c1c1c">Изображения</div><svg class="ic" style="left:1575px;top:499px" width="64" height="64"><use href="#fmusic"/></svg><div class="lbl" style="left:1607px;top:558px;color:#1c1c1c">Музыка</div><svg class="ic" style="left:963px;top:592px" width="64" height="64"><use href="#folder"/></svg><div class="lbl" style="left:995px;top:651px;color:#1c1c1c">Общедоступные</div><svg class="ic" style="left:1086px;top:589px" width="64" height="64"><use href="#desk"/></svg><div class="lbl" style="left:1118px;top:651px;color:#1c1c1c">Рабочий стол</div><svg class="ic" style="left:1208px;top:592px" width="64" height="64"><use href="#folder"/></svg><div class="lbl" style="left:1240px;top:651px;color:#1c1c1c">Шаблоны</div><svg class="ic" style="left:1330px;top:586px;opacity:.5" width="64" height="64"><use href="#txt"/></svg><div class="lbl" style="left:1362px;top:651px;color:#5a5a5a">.bash_completion</div><svg class="ic" style="left:1452px;top:586px;opacity:.5" width="64" height="64"><use href="#txt"/></svg><div class="lbl" style="left:1484px;top:651px;color:#5a5a5a">.bash_history</div><svg class="ic" style="left:1575px;top:586px;opacity:.5" width="64" height="64"><use href="#txt"/></svg><div class="lbl" style="left:1607px;top:651px;color:#5a5a5a">.bash_logout</div><svg class="ic" style="left:963px;top:679px;opacity:.5" width="64" height="64"><use href="#txt"/></svg><div class="lbl" style="left:995px;top:744px;color:#5a5a5a">.bash_profile</div><svg class="ic" style="left:1086px;top:679px;opacity:.5" width="64" height="64"><use href="#txt"/></svg><div class="lbl" style="left:1118px;top:744px;color:#5a5a5a">.bashrc</div><svg class="ic" style="left:1208px;top:679px;opacity:.5" width="64" height="64"><use href="#txt"/></svg><div class="lbl" style="left:1240px;top:744px;color:#5a5a5a">.directory</div><svg class="ic" style="left:1330px;top:679px;opacity:.5" width="64" height="64"><use href="#txt"/></svg><div class="lbl" style="left:1362px;top:744px;color:#5a5a5a">.dmrc</div><svg class="ic" style="left:1452px;top:679px;opacity:.5" width="64" height="64"><use href="#bin"/></svg><div class="lbl" style="left:1484px;top:744px;color:#5a5a5a">.esd_auth</div><svg class="ic" style="left:1575px;top:678px" width="64" height="64"><use href="#face"/></svg><div class="lbl" style="left:1607px;top:744px;color:#5a5a5a">.face.icon</div><svg class="ic" style="left:1679px;top:113px" width="6" height="5" viewBox="0 0 6 5"><path d="M3 0L6 5H0Z" fill="#8c8c8c"/></svg><svg class="ic" style="left:1679px;top:764px" width="6" height="5" viewBox="0 0 6 5"><path d="M3 5L6 0H0Z" fill="#8c8c8c"/></svg><div class="abs" style="left:1677px;top:124px;width:10px;height:635px;border-radius:5px;background:linear-gradient(90deg,#bcbcbc,#d9d9d9)"></div><div class="abs" style="left:1677px;top:124px;width:10px;height:431px;border:1px solid #9a9a9a;border-radius:5px;background:#f0f0f0"></div><div class="t" style="left:186px;top:775px;color:#444;letter-spacing:-.3px">14 папок. 4 файла (5,3 КиБ)</div><div class="t" style="left:927px;top:775px;color:#444;letter-spacing:-.22px">33 папки. 25 файлов (84,9 МиБ)</div><div class="abs" style="left:749px;top:781px;width:170px;height:5px;border:1px solid #b2b2b2;border-radius:2.500px;background:linear-gradient(#bebebe,#d0d0d0)"></div><div class="abs" style="left:749px;top:781px;width:45px;height:5px;border:1px solid #6fa6de;border-radius:2.500px;background:linear-gradient(#8cc0f0,#a8d2f8)"></div><div class="abs" style="left:788px;top:777.5px;width:12px;height:12px;border:1px solid #8c8c8c;border-radius:6px;background:linear-gradient(#fff,#e2e2e2)"></div><div class="abs" style="left:1517px;top:781px;width:170px;height:5px;border:1px solid #b2b2b2;border-radius:2.500px;background:linear-gradient(#bebebe,#d0d0d0)"></div><div class="abs" style="left:1517px;top:781px;width:45px;height:5px;border:1px solid #6fa6de;border-radius:2.500px;background:linear-gradient(#8cc0f0,#a8d2f8)"></div><div class="abs" style="left:1556px;top:777.5px;width:12px;height:12px;border:1px solid #8c8c8c;border-radius:6px;background:linear-gradient(#fff,#e2e2e2)"></div></div>
<div class="abs" id="panel" style="left:0;top:1044px;width:1920px;height:36px;background:#788ea7"></div><svg class="abs" style="left:0;top:1044px" width="1920" height="36" viewBox="0 0 1920 36"><defs><linearGradient id="gPA" x1="0" y1="0" x2="1920" y2="0" gradientUnits="userSpaceOnUse"><stop offset="0" stop-color="#a1b0b9"/><stop offset=".74" stop-color="#a1b0b9"/><stop offset=".79" stop-color="#a9b7bf"/><stop offset="1" stop-color="#a9b7bf"/></linearGradient></defs><path d="M1440 0H1920V22L1900 21.700L1760 19.500L1700 18L1600 15.800L1520 14.500L1480 13L1440 10.500Z" fill="#9dadb8"/><path d="M0 0H1780L1780 0.0L1760 0.3L1740 0.6L1720 1.0L1700 1.5L1680 2.2L1660 2.9L1640 3.6L1620 4.4L1600 5.2L1580 6.1L1560 6.9L1540 7.8L1520 8.5L1500 9.2L1480 9.8L1460 10.4L1440 11.0L1420 11.5L1400 12.0L1380 12.4L1360 12.8L1340 13.2L1320 13.6L1300 14.0L1280 14.3L1260 14.6L1240 14.9L1220 15.2L1200 15.6L1180 15.9L1160 16.2L1140 16.5L1120 16.9L1100 17.2L1080 17.6L1060 17.9L1040 18.3L1020 18.7L1000 19.1L980 19.5L960 19.9L940 20.3L920 20.7L900 21.1L880 21.5L860 21.8L840 22.1L820 22.4L800 22.7L780 23.0L760 23.2L740 23.5L720 23.7L700 23.9L680 24.2L660 24.3L640 24.5L620 24.6L600 24.7L580 24.8L560 24.9L540 24.9L520 25.0L500 25.0L480 24.9L460 24.7L440 24.3L420 24.0L400 23.6L380 23.2L360 22.8L340 22.4L320 21.9L300 21.5L280 21.0L260 20.6L240 20.2L220 19.9L200 19.5L180 19.2L160 18.8L140 18.5L120 18.2L100 17.8L80 17.4L60 17.1L40 16.7L20 16.4L0 16.0Z" fill="url(#gPA)"/></svg><div class="abs" style="left:4px;top:1034.7px;width:40px;height:40px;border-radius:50%;background:radial-gradient(ellipse 24% 11% at 50% 6%,rgba(255,255,255,.95),rgba(255,255,255,0) 100%),radial-gradient(ellipse 24% 11% at 50% 95%,rgba(255,255,255,.9),rgba(255,255,255,0) 100%),radial-gradient(ellipse 40% 30% at 50% 14%,rgba(190,215,245,.45),rgba(190,215,245,0) 100%),radial-gradient(ellipse 40% 30% at 50% 88%,rgba(190,215,245,.4),rgba(190,215,245,0) 100%),radial-gradient(circle at 50% 50%,#86aed8 0,#5a88c0 38%,#33629f 56%,#1a4582 74%,#123a76 92%,#16407c 100%)"></div><svg class="abs" style="left:4px;top:1034.7px" width="40" height="40" viewBox="-20 -20 40 40"><defs><linearGradient id="gDrop20" x1="1" y1="0" x2="0" y2="1"><stop offset="0" stop-color="#d8e4f0"/><stop offset=".35" stop-color="#fff"/><stop offset="1" stop-color="#e2ecf6"/></linearGradient></defs><path d="M9.7 -12.6L9.9 -1C10.6 6 6 11.6 0 11.6C-6 11.6 -10.4 7 -10.4 1.3C-10.4 -5 -4.5 -7.8 1.5 -9C5 -9.8 8 -10.8 9.7 -12.6Z" fill="url(#gDrop20)"/></svg><div class="abs" style="left:51.3px;top:1030.8px;width:48.4px;height:48.4px;border-radius:50%;background:radial-gradient(ellipse 24% 11% at 50% 6%,rgba(255,255,255,.95),rgba(255,255,255,0) 100%),radial-gradient(ellipse 24% 11% at 50% 95%,rgba(255,255,255,.9),rgba(255,255,255,0) 100%),radial-gradient(ellipse 40% 30% at 50% 14%,rgba(190,215,245,.45),rgba(190,215,245,0) 100%),radial-gradient(ellipse 40% 30% at 50% 88%,rgba(190,215,245,.4),rgba(190,215,245,0) 100%),radial-gradient(circle at 50% 50%,#86aed8 0,#5a88c0 38%,#33629f 56%,#1a4582 74%,#123a76 92%,#16407c 100%)"></div><svg class="abs" style="left:51.3px;top:1032.3px" width="48.4" height="48.4" viewBox="-20 -20 40 40"><defs><linearGradient id="gDrop24" x1="1" y1="0" x2="0" y2="1"><stop offset="0" stop-color="#d8e4f0"/><stop offset=".35" stop-color="#fff"/><stop offset="1" stop-color="#e2ecf6"/></linearGradient></defs><path d="M9.7 -12.6L9.9 -1C10.6 6 6 11.6 0 11.6C-6 11.6 -10.4 7 -10.4 1.3C-10.4 -5 -4.5 -7.8 1.5 -9C5 -9.8 8 -10.8 9.7 -12.6Z" fill="url(#gDrop24)"/></svg><svg class="abs" style="left:107px;top:1035px" width="40" height="41" viewBox="0 0 40 41"><defs><linearGradient id="gFm" x1="0" y1="0" x2="0" y2="1"><stop offset="0" stop-color="#5a98e0"/><stop offset="1" stop-color="#90c4f2"/></linearGradient></defs><rect x="12" y="2.5" width="20" height="13" fill="#f6f6f2" stroke="#c8c8c0" stroke-width=".5"/><rect x="6.5" y=".8" width="27.5" height="2" fill="#8ccc5a"/><path d="M14 6H30M14 8H30" stroke="#e0c0b0" stroke-width=".6"/><rect x="4" y="3" width="11.5" height="9" fill="#f2c838" transform="rotate(-6 9 7)"/><path d="M6 6.5L9 5.5M7 9L12 7.5" stroke="#d8a820" stroke-width=".8"/><rect x="21.5" y="5.5" width="14.5" height="10" fill="#6e4a32"/><rect x="24.2" y="7" width="9" height="8" fill="#78b4ec"/><path d="M22.8 6.5V15M34.7 6.5V15" stroke="#c8a888" stroke-width=".9" stroke-dasharray="1 1"/><path d="M2 9.5H5L6.5 12.5H2Z" fill="#f2f2f2"/><path d="M1.2 13H36.5Q38 13 38 14.5L37.2 36.5Q37.1 38 35.6 38H3.2Q1.8 38 1.7 36.5L.6 14.5Q.5 13 1.2 13Z" fill="url(#gFm)"/><path d="M1.2 13H36.5Q38 13 38 14.5V15.5H.6V14.5Q.5 13 1.2 13Z" fill="#4a88d4"/><path d="M25 22.5H33L36.8 26.3V38.5H25Z" fill="#f4f4f4" stroke="#b0b0b0" stroke-width=".5"/><path d="M33 22.5V26.3H36.8" fill="#ddd" stroke="#b0b0b0" stroke-width=".4"/><path d="M26.5 26H31M26.5 28H35.5M26.5 30H35.5M26.5 32H35.5M26.5 34H35.5M26.5 36H35.5" stroke="#9a9a9a" stroke-width=".9"/><path d="M2.5 36.2Q2.5 33.5 5 33.5H6.5Q8.5 33.5 8.5 36.2Z" fill="#e8e8e8"/><rect x=".8" y="37.8" width="37.5" height="1.6" rx=".8" fill="#c8ccd0"/></svg><svg class="abs" style="left:160px;top:1036px" width="35" height="39" viewBox="0 0 35 39"><rect x="4.7" y=".2" width="25.8" height="3" rx=".8" fill="#b4bcc6"/><rect x=".3" y="2" width="34.4" height="36.2" rx="2" fill="#6cb0f0"/><path d="M.3 36V4Q.3 2 2.3 2H32.7Q34.7 2 34.7 4V6H.3Z" fill="#7cbaf4" opacity=".6"/><path d="M11.3 24L12.5 19.3L24.3 7.5Q25.6 6.4 26.9 7.6L28.2 8.9Q29.3 10.2 28.2 11.4L16.3 23.2Z" fill="none" stroke="#f4f9ff" stroke-width="1.5" stroke-linejoin="round"/><path d="M22.3 9.6L26.2 13.5" stroke="#f4f9ff" stroke-width="1.3"/><path d="M11.3 24L13.2 21.2L14.6 22.8Z" fill="#f4f9ff"/><path d="M6 26.9H29.2" stroke="#eaf4fe" stroke-width=".9"/><path d="M6 29.3H20.8" stroke="#f4f9ff" stroke-width="1.5"/><rect x="6.6" y="34.3" width="21.6" height="3.2" rx=".8" fill="#dfe3e8"/><rect x="6.6" y="36.6" width="21.6" height="1.2" fill="#b0b6be"/></svg><svg class="abs" style="left:210px;top:1036px" width="37" height="37" viewBox="0 0 37 37"><defs><radialGradient id="gFxG" cx=".45" cy=".3" r=".75"><stop offset="0" stop-color="#5ab8ec"/><stop offset=".45" stop-color="#1f78c8"/><stop offset="1" stop-color="#142c7c"/></radialGradient><radialGradient id="gFxO" cx=".62" cy=".25" r=".9"><stop offset="0" stop-color="#ffd83a"/><stop offset=".3" stop-color="#ff9a20"/><stop offset=".65" stop-color="#ee5a1c"/><stop offset="1" stop-color="#c8381c"/></radialGradient></defs><circle cx="21" cy="15.5" r="12" fill="url(#gFxG)"/><path d="M3.2 7.5C4.2 8 5.2 9.2 5.6 10.6C6.8 8.6 9 7.2 11.6 6.6C10.4 8.4 10.2 11 11 13.6C11.8 16 13.6 17.8 16 18.6C14.6 19.6 12.6 19.8 11 19.2C11.8 22.2 14.6 24.4 18.4 24.8C23.6 25.4 28.4 22 29.8 17C30.8 13.4 30.2 9.4 28 6C31.6 8.2 34.4 12.4 35.2 17C36.2 23 33.8 29 29 32.6C23.4 36.8 15.4 37 9.6 32.8C4 28.8 1.4 21.4 2.2 14.6C2.4 12 2.6 9.6 3.2 7.5Z" fill="url(#gFxO)"/><path d="M29.8 7.6C32.8 10.4 34.8 14.4 35.2 18.6C35.6 22.4 34.6 26 32.6 29C33.6 25.4 33.6 21.6 32.6 18C31.8 14.4 31.2 10.6 29.8 7.6Z" fill="#ffe45a" opacity=".9"/><path d="M12 19.6C14 22 17.5 23.6 21 23C19 24.6 15.5 24.8 13.4 23.4C12.4 22.6 11.8 21 12 19.6Z" fill="#1a2468" opacity=".75"/><path d="M11.6 6.6C12.8 6.4 14.4 6.8 15.4 7.6C14.2 8 13.2 9 12.8 10.2C12 9.2 11.4 7.8 11.6 6.6Z" fill="#f6a030"/></svg><div class="abs" style="left:257.5px;top:1050px;width:5px;height:4px;background:#b9c5cf;opacity:.8"></div><div class="abs" style="left:256.5px;top:1059px;width:7px;height:4px;background:#b9c5cf;opacity:.8"></div><div class="abs" style="left:255.5px;top:1070px;width:9px;height:6px;background:#b9c5cf;opacity:.8"></div><div class="abs" style="left:1415.5px;top:1050px;width:5px;height:4px;background:#b9c5cf;opacity:.8"></div><div class="abs" style="left:1414.5px;top:1059px;width:7px;height:4px;background:#b9c5cf;opacity:.8"></div><div class="abs" style="left:1413.5px;top:1070px;width:9px;height:6px;background:#b9c5cf;opacity:.8"></div><svg class="abs" style="left:1430px;top:1036px" width="43" height="42" viewBox="0 0 43 42"><path d="M3 8V5Q3 3.5 4.5 3.5H12L14 1.5H22L24 4H38Q39.5 4 39.5 5.5V9Z" fill="#d4dde6" stroke="#a8b4c0" stroke-width=".7"/><path d="M2 7H41Q42.6 7 42.4 8.6L40.5 36.5Q40.3 38 38.8 38H4.2Q2.7 38 2.5 36.5L.6 8.6Q.4 7 2 7Z" fill="url(#gF)" stroke="#4b83bf" stroke-width=".8"/><circle cx="21.5" cy="23" r="11" fill="#4d86c6" fill-opacity=".5" stroke="#9cc6ee" stroke-opacity=".6"/><path d="M19 15.5H24V21.5H28L21.5 28L15 21.5H19Z" fill="#9ac6ee" fill-opacity=".3" stroke="#a8d0f2" stroke-width="1.2" stroke-linejoin="round"/><path d="M16 31H27" stroke="#a8d0f2" stroke-width="1.4"/></svg><svg class="abs" style="left:1482px;top:1035px" width="40" height="40" viewBox="0 0 40 40"><defs><linearGradient id="gGear" x1="0" y1="0" x2="1" y2="1"><stop offset="0" stop-color="#f2f4f6"/><stop offset=".5" stop-color="#b4bac0"/><stop offset="1" stop-color="#8a9098"/></linearGradient><linearGradient id="gTray" x1="0" y1="0" x2="0" y2="1"><stop offset="0" stop-color="#e4e7ea"/><stop offset="1" stop-color="#a4aab2"/></linearGradient></defs><rect x="3.5" y="5" width="33" height="26" fill="#4f8ed8"/><rect x="1" y="1" width="38" height="4.6" rx="1.2" fill="url(#gTray)" stroke="#7e858c" stroke-width=".6"/><path d="M3 5.6H37L36 8H4Z" fill="#8a9aa8" opacity=".7"/><path d="M36.16 13.76L36.18 14.97L34.62 15.79L34.28 16.67L34.88 18.33L34.04 19.21L32.35 18.68L31.49 19.06L30.74 20.66L29.53 20.68L28.71 19.12L27.83 18.78L26.17 19.38L25.29 18.54L25.82 16.85L25.44 15.99L23.84 15.24L23.82 14.03L25.38 13.21L25.72 12.33L25.12 10.67L25.96 9.79L27.65 10.32L28.51 9.94L29.26 8.34L30.47 8.32L31.29 9.88L32.17 10.22L33.83 9.62L34.71 10.46L34.18 12.15L34.56 13.01Z" fill="url(#gGear)" stroke="#5a6068" stroke-width=".6" stroke-linejoin="round"/><circle cx="30" cy="14.5" r="2" fill="#5a88c4" stroke="#5a6068" stroke-width=".5"/><path d="M28.91 18.00L29.00 19.64L26.70 20.96L26.42 22.27L28.00 24.41L27.26 25.87L24.60 25.86L23.70 26.86L24.00 29.50L22.63 30.39L20.34 29.06L19.06 29.48L18.00 31.91L16.36 32.00L15.04 29.70L13.73 29.42L11.59 31.00L10.13 30.26L10.14 27.60L9.14 26.70L6.50 27.00L5.61 25.63L6.94 23.34L6.52 22.06L4.09 21.00L4.00 19.36L6.30 18.04L6.58 16.73L5.00 14.59L5.74 13.13L8.40 13.14L9.30 12.14L9.00 9.50L10.37 8.61L12.66 9.94L13.94 9.52L15.00 7.09L16.64 7.00L17.96 9.30L19.27 9.58L21.41 8.00L22.87 8.74L22.86 11.40L23.86 12.30L26.50 12.00L27.39 13.37L26.06 15.66L26.48 16.94Z" fill="url(#gGear)" stroke="#5a6068" stroke-width=".6" stroke-linejoin="round"/><circle cx="16.5" cy="19.5" r="7.6" fill="#c8cdd2" stroke="#6a7078" stroke-width=".7"/><circle cx="16.5" cy="19.5" r="5" fill="#9aa0a8" stroke="#5a6068" stroke-width=".6"/><circle cx="16.5" cy="19.5" r="2.6" fill="#e4e8ec" stroke="#5a6068" stroke-width=".6"/><circle cx="16.5" cy="19.5" r="1" fill="#444"/><path d="M1 26H6.5Q7.5 32 13 32.6H27Q32.5 32 33.5 26H39V37.5Q39 39 37.5 39H2.5Q1 39 1 37.5Z" fill="url(#gTray)" stroke="#7e858c" stroke-width=".6"/></svg><div class="abs" style="left:1532.500px;top:1045.800px;width:20px;height:20px;border-radius:10px;background:radial-gradient(circle at 45% 35%,rgba(255,255,255,.58),rgba(255,255,255,.4) 70%,rgba(255,255,255,.32));box-shadow:0 0 0 .700px rgba(90,105,125,.55)"></div><svg class="abs" style="left:1539px;top:1048.500px" width="7" height="6" viewBox="0 0 7 6"><path d="M3.500 0L6.300 3.200H.700Z" fill="#1c1c1c"/><path d="M0 4.800H7" stroke="#fff" stroke-width="1"/></svg><div class="abs" style="left:1533px;top:1053.800px;width:20px;text-align:center;font-size:11px;line-height:11px;color:#fff;font-style:italic">7</div><svg class="abs" style="left:1558.500px;top:1046.500px" width="25" height="21" viewBox="0 0 25 21"><defs><linearGradient id="gSy" x1="0" y1="0" x2="0" y2="1"><stop offset="0" stop-color="#ee2a34"/><stop offset="1" stop-color="#b40e16"/></linearGradient></defs><path d="M3.700 14L1.600 5.100L3.600 5.900C5 1.800 11 -.500 17.500 3C12.500 2.600 9 4.400 7.600 7.300L9.900 8.200Z" fill="url(#gSy)"/><path d="M20.900 4.600L23.500 12.400L21.500 11.900C20 17.500 13.500 21 5.800 16.600C11.500 17.800 16 15.600 17.400 10.900L15.100 10.300Z" fill="url(#gSy)"/></svg><svg class="abs" style="left:1591px;top:1046px" width="18" height="21" viewBox="0 0 18 21"><g fill="#f6f6f6" stroke="#5a6a7c" stroke-width=".500" stroke-linejoin="round"><path d="M2.400 1.800L5.300 1.300L12.600 14.200L11 15.200Z"/><path d="M15.600 1.800L12.700 1.300L5.400 14.200L7 15.200Z"/></g><circle cx="4.400" cy="16.400" r="2.500" fill="none" stroke="#5a6a7c" stroke-width="2.600"/><circle cx="13.600" cy="16.400" r="2.500" fill="none" stroke="#5a6a7c" stroke-width="2.600"/><circle cx="4.400" cy="16.400" r="2.500" fill="none" stroke="#f6f6f6" stroke-width="1.700"/><circle cx="13.600" cy="16.400" r="2.500" fill="none" stroke="#f6f6f6" stroke-width="1.700"/></svg><div class="abs" style="left:1619.500px;top:1046px;font-size:14px;font-weight:bold;line-height:18px;color:#f4f4f4;text-shadow:0 0 2px #445">us</div><svg class="abs" style="left:1643px;top:1046px" width="24" height="20" viewBox="0 0 24 20"><path d="M1.500 7H5L10 2.500V17.500L5 13H1.500Z" fill="#f4f4f4" stroke="#566" stroke-width=".600"/><path d="M12.500 6.500C14 8.500 14 11.500 12.500 13.500M15.500 4.500C18 7.500 18 12.500 15.500 15.500" stroke="#f4f4f4" stroke-width="1.600" fill="none" stroke-linecap="round"/><path d="M18.500 2.500C21.500 6.500 21.500 13.500 18.500 17.500" stroke="#f4f4f4" stroke-opacity=".550" stroke-width="1.400" fill="none" stroke-linecap="round"/></svg><svg class="abs" style="left:1672px;top:1046px" width="22" height="22" viewBox="0 0 22 22"><rect x="5" y="1.500" width="12" height="9.500" rx="1" fill="none" stroke="#f4f4f4" stroke-width="1.700"/><rect x="7.500" y="4" width="7" height="4.500" fill="#f4f4f4" fill-opacity=".500"/><path d="M11 11V17M1.500 18H20.500" stroke="#f4f4f4" stroke-width="1.700"/><rect x="8.500" y="16" width="5" height="4" fill="#f4f4f4"/></svg><svg class="abs" style="left:1703.500px;top:1053px" width="9" height="6" viewBox="0 0 9 6"><path d="M4.500 .300L8.700 5.700H.300Z" fill="#eef2f6"/></svg><div class="abs" id="clock" style="left:1719.500px;top:1034.500px;font-size:38.500px;line-height:43px;color:#e6ebf0;letter-spacing:.800px;white-space:nowrap;text-shadow:0 0 2px rgba(70,90,110,.55),1px 1px 1px rgba(70,90,110,.35)">11:17</div><svg class="abs" style="left:1829px;top:1037px" width="34" height="37" viewBox="0 0 34 37"><defs><pattern id="pMesh" width="2.600" height="2.600" patternUnits="userSpaceOnUse"><circle cx="1.300" cy="1.300" r=".750" fill="#2e3236" fill-opacity=".75"/></pattern><linearGradient id="gRim" x1="0" y1="0" x2="0" y2="1"><stop offset="0" stop-color="#f0f2f4"/><stop offset="1" stop-color="#9a9ea4"/></linearGradient></defs><path d="M2 4.500L6.500 34.500Q6.700 36 8.500 36H25.500Q27.300 36 27.500 34.500L32 4.500Z" fill="url(#gTrash)"/><path d="M2.500 7L6.500 33H27.500L31.500 7Z" fill="url(#pMesh)"/><ellipse cx="17" cy="4" rx="16.300" ry="3.400" fill="url(#gRim)" stroke="#7a7e84" stroke-width=".700"/><ellipse cx="17" cy="4.300" rx="13.500" ry="2.100" fill="#6a6e74"/><path d="M6.300 33Q17 35.500 27.700 33L27.400 35Q17 37.500 6.600 35Z" fill="#c8ccd0" stroke="#7a7e84" stroke-width=".500"/></svg><div class="abs" style="left:1874px;top:1034px;width:20px;height:20px;border-radius:10px;background:radial-gradient(circle at 50% 35%,#ffc070,#f08a28 70%,#d87018)"></div><svg class="abs" style="left:1878px;top:1037px" width="12" height="13" viewBox="0 0 12 13"><path d="M3 6V4Q3 1.5 6 1.5Q9 1.5 9 4V6" fill="none" stroke="#fff" stroke-width="1.6"/><rect x="1.5" y="6" width="9" height="6" rx="1" fill="#fff"/></svg><div class="abs" style="left:1874px;top:1057px;width:20px;height:20px;border-radius:10px;background:radial-gradient(circle at 50% 35%,#f07070,#d83030 70%,#b82020)"></div><svg class="abs" style="left:1878px;top:1061px" width="12" height="12" viewBox="0 0 12 12"><path d="M3.5 3A4.2 4.2 0 1 0 8.500 3" fill="none" stroke="#fff" stroke-width="1.5" stroke-linecap="round"/><path d="M6 1V6" stroke="#fff" stroke-width="1.5" stroke-linecap="round"/></svg><div class="abs" style="left:1900.500px;top:1035px;width:50px;height:50px;border-radius:25px;background:radial-gradient(circle at 50% 50%,#3a5a84 0,#2c4a76 60%,#1e3a64 100%);box-shadow:inset 0 0 0 1px #5a6e88,inset 0 0 0 2.500px #aebac6,inset 0 0 0 3.500px rgba(40,60,90,.6),0 0 2px rgba(20,40,70,.8)"></div><div class="abs" style="left:1906px;top:1050.5px;width:14px;height:2.200px;background:#9eafc0"></div><div class="abs" style="left:1906px;top:1054.7px;width:14px;height:2.200px;background:#9eafc0"></div><div class="abs" style="left:1906px;top:1058.9px;width:14px;height:2.200px;background:#9eafc0"></div><div class="abs" style="left:1906px;top:1063.1px;width:14px;height:2.200px;background:#9eafc0"></div>
</body></html>
